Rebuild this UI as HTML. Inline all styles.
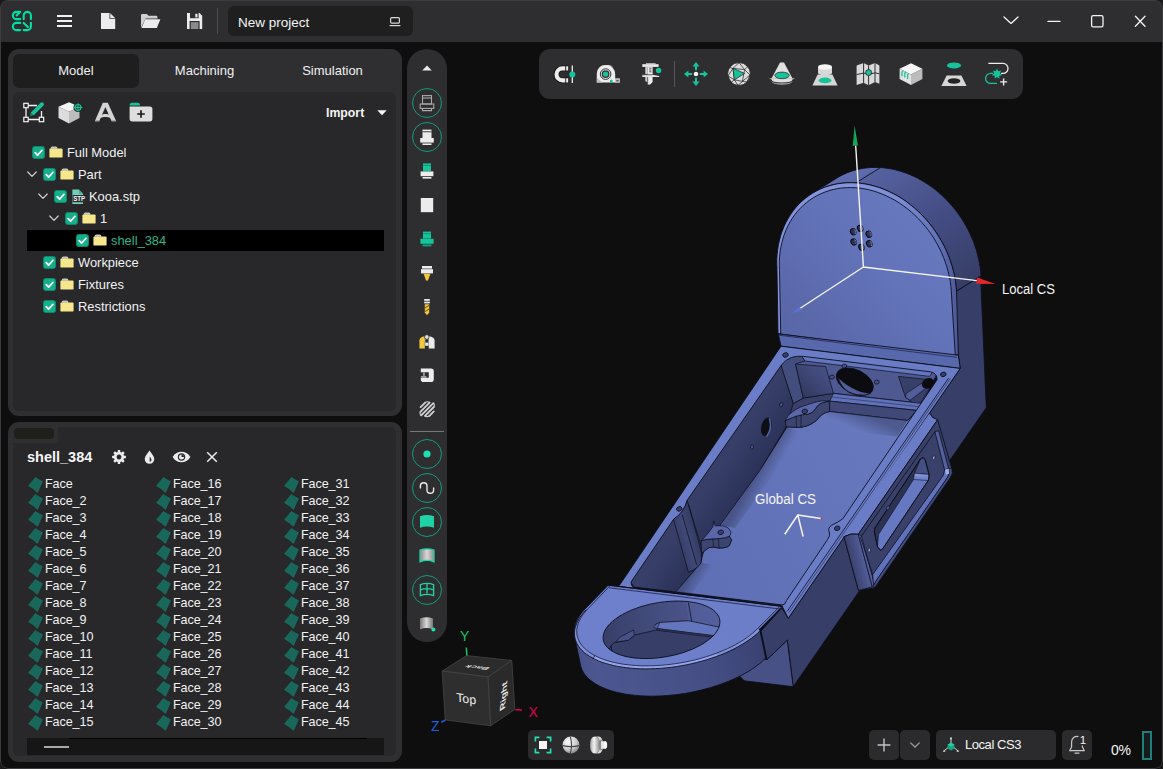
<!DOCTYPE html>
<html lang="en"><head><meta charset="utf-8"><title>New project</title>
<style>
*{box-sizing:border-box;margin:0;padding:0}
html,body{width:1163px;height:769px;overflow:hidden;background:#1a1a1a}
body{font-family:"Liberation Sans",sans-serif;color:#f2f2f2;position:relative}
#win{position:absolute;left:0;top:0;width:1163px;height:769px;background:#0e0e0e;border-radius:8px;overflow:hidden}
#frame{position:absolute;left:0;top:0;width:1163px;height:769px;border-radius:8px;border:1px solid #3c3c3e;pointer-events:none}
.abs{position:absolute}
#title{position:absolute;left:0;top:0;width:1163px;height:42px;background:#2e2e31}
#proj{position:absolute;left:228px;top:6px;width:185px;height:30px;background:#1f1f20;border-radius:6px;font-size:13.5px;line-height:33px;padding-left:10px;color:#f4f4f4}
.panel{position:absolute;background:#2f2f32;border-radius:11px}
.inner{position:absolute;background:#28282a;border-radius:6px}
.tab{position:absolute;top:54px;height:34px;line-height:34px;text-align:center;font-size:13px;color:#f0f0f0}
.tab.on{background:#1e1e1f;border-radius:6px}
.row{position:absolute;left:0;height:22px;line-height:23.6px;font-size:12.9px;color:#f2f2f2;white-space:nowrap}
.cb{position:absolute;width:13px;height:13px;border-radius:2.5px;background:#17b28c;border:1px solid #0f8f70}
.face{position:absolute;font-size:12.6px;line-height:17px;color:#f2f2f2;white-space:nowrap;letter-spacing:-0.1px}
.pill{position:absolute;left:407px;top:49px;width:40px;height:593px;border-radius:20px;background:#2e2e31}
.circ{position:absolute;left:412px;width:30px;height:30px;border-radius:15px;border:1.3px solid #129c7c}
#topbar{position:absolute;left:539px;top:49px;width:484px;height:50px;border-radius:11px;background:#2e2e31}
.bbtn{position:absolute;top:730px;height:30px;background:#2b2b2d;border-radius:5px}
svg{position:absolute;overflow:visible}
</style></head>
<body><div id="win">
<svg style="left:0;top:0" width="1163" height="769" viewBox="0 0 1163 769">
<polygon points="954.6,292.2 980.6,276.2 986.3,407.7 793.2,686.7 787.3,640.2 767.0,659.7 761.0,631.0 781.8,608.0 788.3,618.2 960.2,368.4 958.4,355.2" fill="#373e67" stroke="#0c0f1c" stroke-width="0.9" stroke-linejoin="round" />
<polygon points="787.3,640.2 793.2,686.7 744.1,680.8 715.0,650.0 767.0,659.7" fill="#475186" stroke="#0c0f1c" stroke-width="0.9" stroke-linejoin="round" />
<defs><linearGradient id="gBand" gradientUnits="userSpaceOnUse" x1="896.8" y1="328.4" x2="812.4" y2="193.3"><stop offset="-0.000" stop-color="#363d66"/><stop offset="0.038" stop-color="#373f69"/><stop offset="0.078" stop-color="#39406c"/><stop offset="0.119" stop-color="#3a426e"/><stop offset="0.162" stop-color="#3b4371"/><stop offset="0.205" stop-color="#3d4574"/><stop offset="0.249" stop-color="#3e4677"/><stop offset="0.294" stop-color="#3f4879"/><stop offset="0.339" stop-color="#41497c"/><stop offset="0.384" stop-color="#424b7f"/><stop offset="0.428" stop-color="#434c82"/><stop offset="0.473" stop-color="#454e84"/><stop offset="0.517" stop-color="#464f87"/><stop offset="0.560" stop-color="#485189"/><stop offset="0.602" stop-color="#49538c"/><stop offset="0.643" stop-color="#4b558e"/><stop offset="0.683" stop-color="#4c5791"/><stop offset="0.720" stop-color="#4e5993"/><stop offset="0.757" stop-color="#4f5a96"/><stop offset="0.791" stop-color="#515c98"/><stop offset="0.823" stop-color="#525e9b"/><stop offset="0.853" stop-color="#535f9c"/><stop offset="0.880" stop-color="#54609d"/><stop offset="0.905" stop-color="#56629f"/><stop offset="0.927" stop-color="#5d6bad"/><stop offset="0.946" stop-color="#5e6cae"/><stop offset="0.963" stop-color="#5e6caf"/><stop offset="0.977" stop-color="#5f6db0"/><stop offset="0.987" stop-color="#606eb0"/><stop offset="0.994" stop-color="#606eb1"/><stop offset="0.999" stop-color="#616fb2"/></linearGradient></defs>
<polygon points="956.5,291.0 956.2,286.8 955.7,282.6 955.0,278.4 954.1,274.2 953.1,270.0 952.0,265.8 950.6,261.7 949.2,257.6 947.5,253.5 945.7,249.5 943.8,245.5 941.7,241.6 939.5,237.8 937.2,234.0 934.7,230.4 932.1,226.8 929.3,223.3 926.5,220.0 923.5,216.7 920.5,213.6 917.3,210.6 914.1,207.7 910.7,204.9 907.3,202.3 903.8,199.9 900.2,197.6 896.6,195.4 892.9,193.4 889.1,191.6 885.4,189.9 881.6,188.4 877.7,187.1 873.8,185.9 870.0,184.9 866.1,184.1 862.2,183.5 858.3,183.0 854.5,182.8 850.6,182.7 846.8,182.8 843.1,183.1 839.4,183.5 835.7,184.2 832.1,185.0 828.5,186.0 825.0,187.2 821.6,188.5 818.3,190.0 815.1,191.7 812.0,193.6 836.5,178.3 839.6,176.4 842.8,174.7 846.1,173.2 849.5,171.9 853.0,170.7 856.6,169.7 860.2,168.9 863.9,168.2 867.6,167.8 871.3,167.5 875.1,167.4 879.0,167.5 882.8,167.7 886.7,168.2 890.6,168.8 894.5,169.6 898.3,170.6 902.2,171.8 906.1,173.1 909.9,174.6 913.6,176.3 917.4,178.1 921.1,180.1 924.7,182.3 928.3,184.6 931.8,187.0 935.2,189.6 938.6,192.4 941.8,195.3 945.0,198.3 948.0,201.4 951.0,204.7 953.8,208.0 956.6,211.5 959.2,215.1 961.7,218.7 964.0,222.5 966.2,226.3 968.3,230.2 970.2,234.2 972.0,238.2 973.7,242.3 975.1,246.4 976.5,250.5 977.6,254.7 978.6,258.9 979.5,263.1 980.2,267.3 980.7,271.5 981.0,275.7" fill="url(#gBand)" stroke="#0c0f1c" stroke-width="0.9" stroke-linejoin="round" />
<polyline points="855.9,182.9 880.4,167.6" fill="none" stroke="#0c0f1c" stroke-width="0.9" stroke-linejoin="round" stroke-linecap="round" />
<defs><linearGradient id="gCh" gradientUnits="userSpaceOnUse" x1="850" y1="0" x2="960" y2="0"><stop offset="0" stop-color="#8393dc"/><stop offset="0.450" stop-color="#7c8dd5"/><stop offset="0.800" stop-color="#6272b8"/><stop offset="1" stop-color="#4b5694"/></linearGradient></defs>
<polygon points="958.4,355.2 956.5,291.0 956.1,285.9 955.4,280.8 954.5,275.7 953.3,270.6 951.9,265.6 950.2,260.5 948.4,255.6 946.3,250.6 944.0,245.8 941.4,241.1 938.7,236.5 935.8,232.0 932.7,227.6 929.4,223.4 925.9,219.3 922.3,215.4 918.5,211.7 914.6,208.1 910.5,204.8 906.3,201.6 902.1,198.7 897.7,196.0 893.2,193.6 888.7,191.4 884.1,189.4 879.4,187.6 874.7,186.2 870.0,184.9 865.3,184.0 860.6,183.3 855.9,182.9 851.3,182.7 846.7,182.8 842.1,183.2 837.6,183.8 833.2,184.7 828.9,185.9 824.6,187.3 820.5,189.0 816.6,190.9 812.7,193.1 809.0,195.5 805.5,198.2 802.1,201.0 798.9,204.1 795.9,207.4 793.1,210.9 790.5,214.6 788.1,218.5 785.9,222.5 784.0,226.7 782.2,231.0 780.7,235.5 779.5,240.1 778.4,244.8 777.7,249.6 777.1,254.5 776.8,259.5 776.8,264.5 777.0,269.6 778.0,333.6" fill="url(#gCh)" stroke="#0c0f1c" stroke-width="0.9" stroke-linejoin="round" />
<defs><linearGradient id="gF" gradientUnits="userSpaceOnUse" x1="790" y1="340" x2="940" y2="200"><stop offset="0" stop-color="#5865a6"/><stop offset="0.550" stop-color="#6373b9"/><stop offset="1" stop-color="#697ac1"/></linearGradient></defs>
<polygon points="955.4,356.9 951.3,291.3 950.9,286.4 950.3,281.5 949.4,276.6 948.2,271.7 946.9,266.9 945.3,262.1 943.5,257.3 941.5,252.6 939.3,248.0 936.9,243.5 934.3,239.0 931.5,234.7 928.5,230.5 925.3,226.5 922.0,222.6 918.6,218.9 914.9,215.3 911.2,211.9 907.3,208.7 903.3,205.7 899.2,202.9 895.0,200.3 890.7,198.0 886.4,195.9 882.0,194.0 877.5,192.3 873.1,190.9 868.6,189.7 864.0,188.8 859.5,188.1 855.0,187.7 850.6,187.6 846.2,187.7 841.8,188.0 837.5,188.6 833.3,189.5 829.1,190.6 825.1,192.0 821.2,193.6 817.4,195.4 813.7,197.5 810.1,199.8 806.8,202.4 803.5,205.1 800.5,208.1 797.6,211.2 794.9,214.6 792.4,218.1 790.1,221.8 788.0,225.7 786.2,229.7 784.5,233.8 783.1,238.1 781.9,242.5 780.9,247.0 780.1,251.6 779.6,256.3 779.3,261.1 779.3,265.9 779.5,270.7 780.7,334.0" fill="url(#gF)" stroke="#0c0f1c" stroke-width="0.9" stroke-linejoin="round" />
<ellipse cx="860.2" cy="228.4" rx="2.600" ry="3.200" fill="#2e3557" stroke="#07080e" stroke-width="1.100" transform="rotate(-28 860.2 228.4)"/>
<path d="M860.6 226.0 a2.400 2.900 0 0 1 1.600 4.600" stroke="#8f9bd0" stroke-width="0.800" fill="none"/>
<ellipse cx="853.2" cy="231.8" rx="2.600" ry="3.200" fill="#2e3557" stroke="#07080e" stroke-width="1.100" transform="rotate(-28 853.2 231.8)"/>
<path d="M853.6 229.4 a2.400 2.900 0 0 1 1.600 4.600" stroke="#8f9bd0" stroke-width="0.800" fill="none"/>
<ellipse cx="868.8" cy="234.2" rx="2.600" ry="3.200" fill="#2e3557" stroke="#07080e" stroke-width="1.100" transform="rotate(-28 868.8 234.2)"/>
<path d="M869.2 231.8 a2.400 2.900 0 0 1 1.600 4.600" stroke="#8f9bd0" stroke-width="0.800" fill="none"/>
<ellipse cx="853.7" cy="242.0" rx="2.600" ry="3.200" fill="#2e3557" stroke="#07080e" stroke-width="1.100" transform="rotate(-28 853.7 242.0)"/>
<path d="M854.1 239.6 a2.400 2.900 0 0 1 1.600 4.600" stroke="#8f9bd0" stroke-width="0.800" fill="none"/>
<ellipse cx="869.3" cy="243.8" rx="2.600" ry="3.200" fill="#2e3557" stroke="#07080e" stroke-width="1.100" transform="rotate(-28 869.3 243.8)"/>
<path d="M869.7 241.4 a2.400 2.900 0 0 1 1.600 4.600" stroke="#8f9bd0" stroke-width="0.800" fill="none"/>
<ellipse cx="861.5" cy="247.2" rx="2.600" ry="3.200" fill="#2e3557" stroke="#07080e" stroke-width="1.100" transform="rotate(-28 861.5 247.2)"/>
<path d="M861.9 244.8 a2.400 2.900 0 0 1 1.600 4.600" stroke="#8f9bd0" stroke-width="0.800" fill="none"/>
<defs><linearGradient id="gLed" gradientUnits="userSpaceOnUse" x1="0" y1="340" x2="0" y2="366"><stop offset="0" stop-color="#525d99"/><stop offset="1" stop-color="#5865a6"/></linearGradient></defs>
<polygon points="778.3,334.0 958.4,355.2 960.2,368.4 781.0,346.2" fill="#5868ad" stroke="#0c0f1c" stroke-width="0.9" stroke-linejoin="round" />
<polyline points="779.5,335.3 956.5,357.3" fill="none" stroke="#1a2044" stroke-width="0.7" stroke-linejoin="round" stroke-linecap="round" />
<polygon points="783.0,356.0 938.2,372.5 781.5,604.9 631.0,587.0" fill="#39416a" stroke="#0c0f1c" stroke-width="0.8" stroke-linejoin="round" />
<polygon points="790.0,354.5 938.0,372.0 922.5,403.5 833.5,393.4 803.3,398.0 793.2,403.5 781.6,367.1" fill="#4e5992" stroke="#0c0f1c" stroke-width="0.8" stroke-linejoin="round" />
<polygon points="801.0,355.5 933.0,371.5 929.5,376.4 804.8,361.0" fill="#6476bf" stroke="#0c0f1c" stroke-width="0.7" stroke-linejoin="round" />
<polygon points="780.0,364.0 793.2,403.5 803.3,398.0 795.5,364.0 804.8,361.0 801.0,355.0 788.0,355.0" fill="#434d7e" stroke="#0c0f1c" stroke-width="0.7" stroke-linejoin="round" />
<defs><linearGradient id="gRec" gradientUnits="userSpaceOnUse" x1="800" y1="395" x2="826" y2="368"><stop offset="0" stop-color="#32395e"/><stop offset="1" stop-color="#475186"/></linearGradient></defs>
<polygon points="795.5,364.0 825.7,366.6 833.5,393.4 803.3,398.0" fill="url(#gRec)" stroke="#0c0f1c" stroke-width="0.7" stroke-linejoin="round" />
<polygon points="898.5,376.4 934.0,380.2 931.0,386.0 917.0,409.0 910.0,400.3 905.4,397.3" fill="#383f69" stroke="#0c0f1c" stroke-width="0.7" stroke-linejoin="round" />
<polygon points="906.2,393.4 921.7,383.3 926.3,388.0 910.0,400.3 905.4,397.3" fill="#525d99" stroke="#0c0f1c" stroke-width="0.6" stroke-linejoin="round" />
<ellipse cx="927.900" cy="383.300" rx="6.300" ry="5" fill="#0c0c10" transform="rotate(-30 927.900 383.300)"/>
<ellipse cx="854.800" cy="381.600" rx="19.800" ry="11.800" fill="#0c0c10" stroke="#0a0c18" stroke-width="0.800" transform="rotate(26 854.800 381.600)"/>
<path d="M838.200 377.500 Q842 392 856 394.500 Q864 396 870.500 393.500 Q860 392.500 852.500 388 Q843 383 838.200 377.500Z" fill="#525d99" stroke="#0c0f1c" stroke-width="0.6" stroke-linejoin="round" stroke-linecap="round" />
<path d="M839.500 382.500 Q845 394.500 862 396.200" fill="none" stroke="#0a0c18" stroke-width="0.6" stroke-linejoin="round" stroke-linecap="round" />
<ellipse cx="844.3" cy="366.0" rx="2.400" ry="2" fill="#475186" stroke="#0a0c18" stroke-width="0.700" transform="rotate(-15 844.3 366.0)"/>
<ellipse cx="831.9" cy="377.1" rx="2.400" ry="2" fill="#475186" stroke="#0a0c18" stroke-width="0.700" transform="rotate(-15 831.9 377.1)"/>
<ellipse cx="876.8" cy="382.1" rx="2.400" ry="2" fill="#475186" stroke="#0a0c18" stroke-width="0.700" transform="rotate(-15 876.8 382.1)"/>
<ellipse cx="855.9" cy="406.2" rx="2.400" ry="2" fill="#475186" stroke="#0a0c18" stroke-width="0.700" transform="rotate(-15 855.9 406.2)"/>
<polyline points="860.5,394.5 856.5,404.5" fill="none" stroke="#0c0f1c" stroke-width="0.6" stroke-linejoin="round" stroke-linecap="round" />
<polygon points="833.5,393.4 922.5,403.5 917.0,410.4 829.6,401.1" fill="#6071b9" stroke="#0c0f1c" stroke-width="0.7" stroke-linejoin="round" />
<polyline points="831.5,397.0 920.0,406.8" fill="none" stroke="#282e4c" stroke-width="0.6" stroke-linejoin="round" stroke-linecap="round" />
<polygon points="829.6,401.1 917.0,410.4 907.8,420.5 829.6,411.5" fill="#3f4877" stroke="#0c0f1c" stroke-width="0.7" stroke-linejoin="round" />
<defs><linearGradient id="gLW" gradientUnits="userSpaceOnUse" x1="738" y1="440" x2="768" y2="460"><stop offset="0" stop-color="#373f69"/><stop offset="1" stop-color="#2b3157"/></linearGradient></defs>
<polygon points="781.0,360.0 781.6,367.1 793.2,403.5 786.3,426.7 760.2,470.0 720.0,526.0 702.7,548.7 701.2,562.7 676.0,591.8 634.3,587.1 631.2,583.0 631.3,580.5" fill="url(#gLW)" stroke="#0c0f1c" stroke-width="0.8" stroke-linejoin="round" />
<defs><linearGradient id="gPil" gradientUnits="userSpaceOnUse" x1="676" y1="545" x2="700" y2="538"><stop offset="0" stop-color="#333a60"/><stop offset="0.500" stop-color="#3f4877"/><stop offset="1" stop-color="#32395e"/></linearGradient></defs>
<path d="M673.800 519 Q684 512 687.100 500.300 L701.900 548.700 L701.200 562.700 Q699 568 688.700 572.100 Z" fill="url(#gPil)" stroke="#0c0f1c" stroke-width="0.7" stroke-linejoin="round" stroke-linecap="round" />
<polyline points="682.4,515.1 696.5,564.3" fill="none" stroke="#0c0f1c" stroke-width="0.7" stroke-linejoin="round" stroke-linecap="round" />
<polyline points="688.7,505.0 701.2,552.0" fill="none" stroke="#0c0f1c" stroke-width="0.7" stroke-linejoin="round" stroke-linecap="round" stroke-dasharray="2.200 1.100"/>
<defs><linearGradient id="gFl" gradientUnits="userSpaceOnUse" x1="700" y1="540" x2="890" y2="440"><stop offset="0" stop-color="#6070b6"/><stop offset="0.500" stop-color="#6474ba"/><stop offset="1" stop-color="#6778be"/></linearGradient></defs>
<path d="M787.500 426.900 L796.300 427.400 Q807 428 816.400 420.500 Q822 412.500 829.600 411.500 L907.800 420.500 L917 410.400 L922.500 403.500 L945 381 L790 606 L676 591.800 L701.200 562.700 Q702.500 552 705.100 550.200 Q709 546.500 713.600 547.100 Q719 548.500 723 547.900 Q728.500 547 729.300 545.600 L731.600 540.100 L729.300 536.200 L725 527 L719.500 526 L760.200 470 Z" fill="url(#gFl)" stroke="#0c0f1c" stroke-width="0.8" stroke-linejoin="round" stroke-linecap="round" />
<defs><linearGradient id="gAO1" gradientUnits="userSpaceOnUse" x1="868" y1="416" x2="861" y2="432"><stop offset="0" stop-color="#2a304f" stop-opacity="0.420"/><stop offset="1" stop-color="#2a304f" stop-opacity="0"/></linearGradient><linearGradient id="gAO2" gradientUnits="userSpaceOnUse" x1="754" y1="478" x2="768" y2="486"><stop offset="0" stop-color="#2a304f" stop-opacity="0.450"/><stop offset="1" stop-color="#2a304f" stop-opacity="0"/></linearGradient><linearGradient id="gAO3" gradientUnits="userSpaceOnUse" x1="690" y1="577" x2="702" y2="584"><stop offset="0" stop-color="#2a304f" stop-opacity="0.450"/><stop offset="1" stop-color="#2a304f" stop-opacity="0"/></linearGradient></defs>
<polygon points="816.4,420.5 829.6,411.5 907.8,420.5 897.0,436.5 822.0,428.0 808.0,436.0" fill="url(#gAO1)" stroke="none" stroke-width="0" stroke-linejoin="round" />
<polygon points="787.5,426.9 760.2,470.0 721.0,525.0 735.0,528.0 774.0,474.0 801.0,433.0" fill="url(#gAO2)" stroke="none" stroke-width="0" stroke-linejoin="round" />
<polygon points="701.2,562.7 676.0,591.8 691.0,593.5 715.0,565.0" fill="url(#gAO3)" stroke="none" stroke-width="0" stroke-linejoin="round" />
<path d="M785.500 420.500 Q791 418 796.300 416.200 Q803 414 807.900 414.300 Q812.500 413 814.900 409.600 Q817 405.500 819.500 404.200 Q822 402 829.600 401.100 L829.600 411.500 Q822 412.500 816.400 420.500 Q807 428 796.300 427.400 L786.300 426.700 Z" fill="#3c4470" stroke="#0c0f1c" stroke-width="0.7" stroke-linejoin="round" stroke-linecap="round" />
<path d="M785.500 420.500 Q787.500 414.500 793.200 411.200 Q797 408.500 801 406.900 L810.200 403.800 Q816 401.500 822.600 400.700 L829.600 401.100 Q822 402 819.500 404.200 Q817 405.500 814.900 409.600 Q812.500 413 807.900 414.300 Q803 414 796.300 416.200 Q791 418 785.500 420.500 Z" fill="#5a67aa" stroke="#0c0f1c" stroke-width="0.7" stroke-linejoin="round" stroke-linecap="round" />
<ellipse cx="804.800" cy="411.300" rx="2.900" ry="2.300" fill="#383f69" stroke="#0a0c18" stroke-width="0.700" transform="rotate(-15 804.800 411.300)"/>
<polyline points="796.3,416.2 796.3,427.4" fill="none" stroke="#0c0f1c" stroke-width="0.6" stroke-linejoin="round" stroke-linecap="round" />
<polyline points="801.0,415.0 801.0,427.6" fill="none" stroke="#0c0f1c" stroke-width="0.6" stroke-linejoin="round" stroke-linecap="round" />
<ellipse cx="766.300" cy="426.800" rx="4.600" ry="9" fill="#0e0f16" stroke="#0a0c18" stroke-width="0.700" transform="rotate(14 766.300 426.800)"/>
<path d="M769.500 419 Q772.500 428 767 436" fill="none" stroke="#5764a4" stroke-width="1.5" stroke-linejoin="round" stroke-linecap="round" />
<ellipse cx="781.200" cy="404.800" rx="1.600" ry="2.300" fill="#485287" stroke="#0a0c18" stroke-width="0.700" transform="rotate(14 781.200 404.800)"/>
<ellipse cx="752" cy="447" rx="1.600" ry="2.300" fill="#485287" stroke="#0a0c18" stroke-width="0.700" transform="rotate(14 752 447)"/>
<path d="M701.200 540.900 Q704 539.500 707.400 539.300 L719.900 538.500 Q726 538 729.300 536.200 L731.600 540.100 L729.300 545.600 Q728.500 547 723 547.900 Q719 548.500 713.600 547.100 Q709 546.500 705.100 550.200 L701.900 553.400 Z" fill="#3c4470" stroke="#0c0f1c" stroke-width="0.7" stroke-linejoin="round" stroke-linecap="round" />
<path d="M713.600 521.400 L713 526.500 Q708 534 701.200 540.900 Q704 539.500 707.400 539.300 L719.900 538.500 Q726 538 729.300 536.200 Q731.500 534 730.800 531.500 Q729 527 724 526 Q719 525.500 715.500 525.800 Z" fill="#5966a8" stroke="#0c0f1c" stroke-width="0.7" stroke-linejoin="round" stroke-linecap="round" />
<ellipse cx="720.700" cy="532.300" rx="2.900" ry="2.300" fill="#383f69" stroke="#0a0c18" stroke-width="0.700" transform="rotate(-15 720.700 532.300)"/>
<polyline points="713.0,539.0 713.6,547.1" fill="none" stroke="#0c0f1c" stroke-width="0.6" stroke-linejoin="round" stroke-linecap="round" />
<polyline points="718.5,538.6 719.0,548.2" fill="none" stroke="#0c0f1c" stroke-width="0.6" stroke-linejoin="round" stroke-linecap="round" />
<defs><linearGradient id="gRim" gradientUnits="userSpaceOnUse" x1="640" y1="560" x2="950" y2="380"><stop offset="0" stop-color="#6b7dc7"/><stop offset="1" stop-color="#6a7cc6"/></linearGradient></defs>
<path fill-rule="evenodd" d="M781 346.200 L960.200 368.400 L788.300 618.200 L782.200 606.400 L608.200 585.200 L619.250 585.600 Z M781.800 364.500 Q785.500 359.800 791.500 357.400 Q797 355.600 803.700 356.400 L931 371.900 Q937.800 373.600 936.900 380 L842.800 518.800 Q837.500 522.600 831.700 525.200 Q827.300 528 829.300 532 Q830.500 536 827.600 539.500 L786.500 600.500 Q785 605.600 781.500 605.200 L635.500 588 Q630.500 587 631.300 581.500 L673.800 519 Q684 512.500 687.100 500.300 Z" fill="url(#gRim)" stroke="#0c0f1c" stroke-width="0.900" stroke-linejoin="round"/>
<polyline points="948.3,378.5 787.3,611.2" fill="none" stroke="#141a38" stroke-width="0.9" stroke-linejoin="round" stroke-linecap="round" />
<polyline points="950.3,378.7 789.0,612.5" fill="none" stroke="#2b3151" stroke-width="0.7" stroke-linejoin="round" stroke-linecap="round" />
<ellipse cx="785.5" cy="355.0" rx="2.800" ry="2.200" fill="#383f69" stroke="#0a0c18" stroke-width="0.800" transform="rotate(-20 785.5 355.0)"/>
<ellipse cx="943.3" cy="374.4" rx="2.800" ry="2.200" fill="#383f69" stroke="#0a0c18" stroke-width="0.800" transform="rotate(-20 943.3 374.4)"/>
<ellipse cx="679.3" cy="508.9" rx="2.800" ry="2.200" fill="#383f69" stroke="#0a0c18" stroke-width="0.800" transform="rotate(-20 679.3 508.9)"/>
<ellipse cx="837.2" cy="528.3" rx="2.800" ry="2.200" fill="#383f69" stroke="#0a0c18" stroke-width="0.800" transform="rotate(-20 837.2 528.3)"/>
<polygon points="929.2,413.7 932.5,417.4 937.6,419.8 858.3,534.3 851.0,534.2 842.6,536.9" fill="#6a7cc6" stroke="none" stroke-width="0" stroke-linejoin="round" />
<polyline points="930.6,413.9 932.5,417.4 937.6,419.8 858.3,534.3 851.0,534.2 844.0,536.8" fill="none" stroke="#0c0f1c" stroke-width="0.9" stroke-linejoin="round" stroke-linecap="round" />
<polygon points="937.6,419.8 951.8,468.5 952.3,473.0 950.3,477.5 874.5,588.0 858.5,590.5 844.0,536.8 851.0,534.2 858.3,534.3" fill="#39416a" stroke="#0c0f1c" stroke-width="0.9" stroke-linejoin="round" />
<defs><linearGradient id="gFil" gradientUnits="userSpaceOnUse" x1="848" y1="560" x2="864" y2="556"><stop offset="0" stop-color="#373e67"/><stop offset="0.700" stop-color="#495389"/><stop offset="1" stop-color="#535e9b"/></linearGradient></defs>
<polygon points="844.0,536.8 851.0,534.2 858.3,534.3 872.3,586.8 858.5,590.5" fill="url(#gFil)" stroke="#0c0f1c" stroke-width="0.8" stroke-linejoin="round" />
<polygon points="858.3,534.3 861.3,535.6 874.6,585.0 872.3,586.8" fill="#5662a2" stroke="#0c0f1c" stroke-width="0.7" stroke-linejoin="round" />
<polygon points="944.6,470.0 948.6,468.3 949.3,473.5 947.3,477.8 876.8,579.8 873.6,585.4 872.6,574.6 943.4,475.2" fill="#6072bb" stroke="#0c0f1c" stroke-width="0.8" stroke-linejoin="round" />
<polygon points="948.6,468.3 951.8,468.5 952.3,473.0 950.3,477.5 874.5,588.0 873.6,585.4 876.8,579.8 947.3,477.8 949.3,473.5" fill="#444e80" stroke="#0c0f1c" stroke-width="0.7" stroke-linejoin="round" />
<polygon points="934.9,431.8 938.6,430.6 948.6,468.3 944.6,470.0" fill="#54609f" stroke="#0c0f1c" stroke-width="0.8" stroke-linejoin="round" />
<polygon points="944.8,469.8 948.6,468.4 949.2,473.4 946.0,474.8" fill="#a2b0ea" stroke="none" stroke-width="0" stroke-linejoin="round" />
<polyline points="934.9,431.8 933.7,433.4 860.5,537.5 872.6,574.6" fill="none" stroke="#0c0f1c" stroke-width="0.8" stroke-linejoin="round" stroke-linecap="round" />
<polygon points="923.2,457.5 925.2,460.0 929.0,474.5 928.5,480.0 882.5,549.0 880.3,550.3 877.5,546.5 874.3,531.5 875.0,528.0 920.5,459.0" fill="#6678c2" stroke="#0c0f1c" stroke-width="0.8" stroke-linejoin="round" />
<polygon points="920.5,459.0 914.5,473.0 913.5,479.5 878.5,534.5 877.5,546.5 874.3,531.5 875.0,528.0" fill="#2c3253" stroke="#0c0f1c" stroke-width="0.6" stroke-linejoin="round" />
<polygon points="923.2,457.5 925.2,460.0 929.0,474.5 914.5,473.2 920.5,459.0" fill="#454f82" stroke="#0c0f1c" stroke-width="0.6" stroke-linejoin="round" />
<defs><linearGradient id="gCyl" x1="0" y1="0" x2="0" y2="1"><stop offset="0" stop-color="#8d9de2"/><stop offset="1" stop-color="#6173bb"/></linearGradient></defs>
<polygon points="914.5,473.2 929.0,474.5 928.4,480.6 913.5,479.5" fill="url(#gCyl)" stroke="#0c0f1c" stroke-width="0.5" stroke-linejoin="round" />
<polygon points="923.2,457.5 925.2,460.0 929.0,474.5 928.5,480.0 882.5,549.0 880.3,550.3 877.5,546.5 874.3,531.5 875.0,528.0 920.5,459.0" fill="none" stroke="#0c0f1c" stroke-width="0.800"/>
<ellipse cx="933.700" cy="457.800" rx="1.300" ry="2" fill="#97a5e4" stroke="#0a0c18" stroke-width="0.600" transform="rotate(15 933.700 457.800)"/>
<ellipse cx="869.300" cy="550.100" rx="1.300" ry="2" fill="#97a5e4" stroke="#0a0c18" stroke-width="0.600" transform="rotate(15 869.300 550.100)"/>
<ellipse cx="887.900" cy="507.900" rx="1.400" ry="2.200" fill="#525d99" stroke="#0a0c18" stroke-width="0.600" transform="rotate(30 887.900 507.900)"/>
<defs><linearGradient id="gRB" gradientUnits="userSpaceOnUse" x1="754.2" y1="601.8" x2="575.1" y2="638.8"><stop offset="-0.000" stop-color="#394170"/><stop offset="0.022" stop-color="#3a4272"/><stop offset="0.046" stop-color="#3b4374"/><stop offset="0.073" stop-color="#3c4576"/><stop offset="0.101" stop-color="#3d4677"/><stop offset="0.131" stop-color="#3e4779"/><stop offset="0.162" stop-color="#3f487b"/><stop offset="0.195" stop-color="#40497d"/><stop offset="0.229" stop-color="#414b7f"/><stop offset="0.264" stop-color="#424c81"/><stop offset="0.301" stop-color="#434d82"/><stop offset="0.337" stop-color="#444e84"/><stop offset="0.375" stop-color="#454f86"/><stop offset="0.413" stop-color="#465087"/><stop offset="0.451" stop-color="#475188"/><stop offset="0.489" stop-color="#475189"/><stop offset="0.527" stop-color="#475289"/><stop offset="0.564" stop-color="#48528a"/><stop offset="0.601" stop-color="#48528a"/><stop offset="0.638" stop-color="#48538b"/><stop offset="0.673" stop-color="#49538c"/><stop offset="0.707" stop-color="#49548c"/><stop offset="0.741" stop-color="#4a548d"/><stop offset="0.772" stop-color="#4a558d"/><stop offset="0.802" stop-color="#4a558e"/><stop offset="0.831" stop-color="#4b558f"/><stop offset="0.857" stop-color="#4b568f"/><stop offset="0.882" stop-color="#4b5690"/><stop offset="0.905" stop-color="#4c5791"/><stop offset="0.925" stop-color="#4c5791"/><stop offset="0.943" stop-color="#4b568f"/><stop offset="0.959" stop-color="#4a558e"/><stop offset="0.972" stop-color="#4a548d"/><stop offset="0.983" stop-color="#49538c"/><stop offset="0.991" stop-color="#48528a"/><stop offset="0.997" stop-color="#475289"/><stop offset="1.000" stop-color="#475188"/></linearGradient></defs>
<polygon points="759.8,629.0 757.7,631.0 755.5,633.0 753.1,635.0 750.6,636.9 748.0,638.8 745.2,640.6 742.3,642.5 739.2,644.2 736.0,646.0 732.8,647.7 729.4,649.3 725.9,650.9 722.3,652.4 718.6,653.8 714.8,655.2 711.0,656.5 707.1,657.8 703.1,659.0 699.1,660.1 695.0,661.1 690.9,662.1 686.8,663.0 682.6,663.8 678.4,664.5 674.2,665.1 670.0,665.7 665.8,666.1 661.6,666.5 657.4,666.8 653.3,667.0 649.2,667.1 645.2,667.2 641.1,667.1 637.2,666.9 633.3,666.7 629.5,666.4 625.8,666.0 622.1,665.5 618.5,664.9 615.1,664.2 611.7,663.5 608.5,662.7 605.4,661.8 602.3,660.8 599.5,659.7 596.7,658.6 594.1,657.4 591.7,656.1 589.3,654.7 587.2,653.3 585.2,651.8 583.3,650.3 581.6,648.7 580.1,647.1 578.7,645.4 577.5,643.6 576.5,641.8 575.7,640.0 575.0,638.1 574.5,636.2 580.5,665.2 581.0,667.1 581.7,669.0 582.5,670.8 583.5,672.6 584.7,674.4 586.1,676.1 587.6,677.7 589.3,679.3 591.2,680.8 593.2,682.3 595.3,683.7 597.7,685.1 600.1,686.4 602.7,687.6 605.5,688.7 608.3,689.8 611.4,690.8 614.5,691.7 617.7,692.5 621.1,693.2 624.5,693.9 628.1,694.5 631.8,695.0 635.5,695.4 639.3,695.7 643.2,695.9 647.1,696.1 651.2,696.2 655.2,696.1 659.3,696.0 663.4,695.8 667.6,695.5 671.8,695.1 676.0,694.7 680.2,694.1 684.4,693.5 688.6,692.8 692.8,692.0 696.9,691.1 701.0,690.1 705.1,689.1 709.1,688.0 713.1,686.8 717.0,685.5 720.8,684.2 724.6,682.8 728.3,681.4 731.9,679.9 735.4,678.3 738.8,676.7 742.0,675.0 745.2,673.2 748.3,671.5 751.2,669.6 754.0,667.8 756.6,665.9 759.1,664.0 761.5,662.0 763.7,660.0 765.8,658.0" fill="url(#gRB)" stroke="#0c0f1c" stroke-width="0.9" stroke-linejoin="round" />
<defs><linearGradient id="gRing" gradientUnits="userSpaceOnUse" x1="590" y1="640" x2="770" y2="600"><stop offset="0" stop-color="#6e80cb"/><stop offset="1" stop-color="#6c7ec8"/></linearGradient></defs>
<polygon points="782.2,606.4 759.8,629.0 757.2,631.5 754.4,633.9 751.4,636.3 748.2,638.6 744.8,640.9 741.1,643.1 737.3,645.3 733.3,647.4 729.1,649.4 724.8,651.3 720.4,653.2 715.8,654.9 711.1,656.5 706.3,658.1 701.3,659.5 696.4,660.8 691.3,662.0 686.2,663.1 681.1,664.0 675.9,664.9 670.8,665.6 665.6,666.2 660.5,666.6 655.3,666.9 650.3,667.1 645.3,667.2 640.4,667.1 635.5,666.9 630.8,666.5 626.2,666.0 621.7,665.4 617.3,664.7 613.1,663.8 609.1,662.8 605.3,661.7 601.6,660.5 598.1,659.2 594.8,657.7 591.8,656.1 588.9,654.5 586.3,652.7 584.0,650.9 581.8,648.9 579.9,646.9 578.3,644.8 577.0,642.6 575.9,640.4 575.0,638.1 574.5,635.7 574.2,633.3 574.1,630.9 574.4,628.4 574.9,625.9 575.7,623.4 576.7,620.8 578.0,618.3 579.6,615.7 581.4,613.2 583.5,610.7 585.8,608.2 608.2,585.2" fill="url(#gRing)" stroke="#0c0f1c" stroke-width="0.9" stroke-linejoin="round" />
<polygon points="760.1,630.7 757.6,633.2 754.8,635.6 751.8,638.0 748.5,640.3 745.1,642.6 741.5,644.8 737.7,647.0 733.7,649.1 729.5,651.1 725.2,653.0 720.7,654.9 716.1,656.6 711.4,658.2 706.6,659.8 701.7,661.2 696.7,662.5 691.7,663.7 686.6,664.8 681.4,665.7 676.3,666.6 671.1,667.3 665.9,667.9 660.8,668.3 655.7,668.6 650.6,668.8 645.6,668.9 640.7,668.8 635.9,668.6 631.1,668.2 626.5,667.7 622.0,667.1 617.7,666.4 613.5,665.5 609.5,664.5 605.6,663.4 601.9,662.2 598.5,660.9 595.2,659.4 592.1,657.8 589.3,656.2 586.7,654.4 584.3,652.6 582.2,650.6 580.3,648.6 578.7,646.5 577.3,644.3 576.2,642.1 575.4,639.8 574.8,637.4 574.5,635.0 574.5,632.6 574.7,630.1 575.2,627.6 576.0,625.1 577.1,622.5 578.4,620.0 579.9,617.4 581.8,614.9 583.8,612.4 586.2,609.9 588.2,608.5 585.9,610.9 583.9,613.4 582.1,615.8 580.6,618.3 579.3,620.8 578.3,623.2 577.5,625.7 577.0,628.1 576.8,630.5 576.8,632.9 577.1,635.2 577.7,637.5 578.5,639.8 579.6,642.0 580.9,644.1 582.5,646.1 584.3,648.1 586.4,650.0 588.7,651.8 591.2,653.5 594.0,655.1 596.9,656.6 600.1,658.1 603.5,659.4 607.1,660.6 610.8,661.6 614.8,662.6 618.8,663.4 623.1,664.2 627.4,664.7 631.9,665.2 636.5,665.5 641.2,665.8 646.0,665.8 650.9,665.8 655.8,665.6 660.8,665.3 665.8,664.9 670.8,664.3 675.8,663.6 680.9,662.8 685.9,661.9 690.8,660.8 695.7,659.7 700.6,658.4 705.3,657.0 710.0,655.5 714.6,653.9 719.1,652.2 723.4,650.4 727.6,648.6 731.7,646.6 735.6,644.6 739.3,642.5 742.8,640.3 746.2,638.1 749.3,635.8 752.2,633.5 754.9,631.1 757.4,628.7" fill="#8191da" stroke="none" stroke-width="0" stroke-linejoin="round" />
<polygon points="717.7,656.0 714.5,657.2 711.3,658.3 708.1,659.3 704.8,660.3 701.5,661.2 698.1,662.1 694.7,663.0 691.3,663.8 687.9,664.5 684.4,665.2 681.0,665.8 677.5,666.4 674.0,666.9 670.5,667.4 667.0,667.7 663.5,668.1 660.1,668.4 656.6,668.6 653.2,668.7 649.8,668.8 646.4,668.9 643.1,668.8 639.8,668.7 636.5,668.6 633.3,668.4 630.1,668.1 627.0,667.8 624.0,667.4 621.0,667.0 618.0,666.4 615.2,665.9 612.4,665.3 609.7,664.6 607.1,663.9 604.5,663.1 602.1,662.2 599.7,661.3 597.4,660.4 595.2,659.4 593.1,658.4 594.9,655.6 597.0,656.7 599.1,657.6 601.3,658.5 603.6,659.4 606.0,660.2 608.5,661.0 611.1,661.7 613.7,662.3 616.4,663.0 619.2,663.5 622.0,664.0 625.0,664.4 627.9,664.8 631.0,665.1 634.0,665.4 637.2,665.6 640.3,665.7 643.5,665.8 646.8,665.8 650.1,665.8 653.4,665.7 656.7,665.6 660.1,665.4 663.4,665.1 666.8,664.8 670.2,664.4 673.6,663.9 677.0,663.4 680.4,662.9 683.8,662.3 687.1,661.6 690.5,660.9 693.8,660.1 697.1,659.3 700.4,658.4 703.6,657.5 706.8,656.5 710.0,655.5 713.1,654.5 716.1,653.4" fill="#93a3ec" stroke="none" stroke-width="0" stroke-linejoin="round" />
<polyline points="780.1,606.1 757.4,628.7 754.9,631.1 752.2,633.5 749.3,635.8 746.2,638.1 742.8,640.3 739.3,642.5 735.6,644.6 731.7,646.6 727.6,648.6 723.4,650.4 719.1,652.2 714.6,653.9 710.0,655.5 705.3,657.0 700.6,658.4 695.7,659.7 690.8,660.8 685.9,661.9 680.9,662.8 675.8,663.6 670.8,664.3 665.8,664.9 660.8,665.3 655.8,665.6 650.9,665.8 646.0,665.8 641.2,665.8 636.5,665.5 631.9,665.2 627.4,664.7 623.1,664.2 618.8,663.4 614.8,662.6 610.8,661.6 607.1,660.6 603.5,659.4 600.1,658.1 596.9,656.6 594.0,655.1 591.2,653.5 588.7,651.8 586.4,650.0 584.3,648.1 582.5,646.1 580.9,644.1 579.6,642.0 578.5,639.8 577.7,637.5 577.1,635.2 576.8,632.9 576.8,630.5 577.0,628.1 577.5,625.7 578.3,623.2 579.3,620.8 580.6,618.3 582.1,615.8 583.9,613.4 585.9,610.9 588.2,608.5 610.3,585.5" fill="none" stroke="#161b3a" stroke-width="0.8" stroke-linejoin="round" stroke-linecap="round" />
<polyline points="760.1,630.7 757.6,633.2 754.8,635.6 751.8,638.0 748.5,640.3 745.1,642.6 741.5,644.8 737.7,647.0 733.7,649.1 729.5,651.1 725.2,653.0 720.7,654.9 716.1,656.6 711.4,658.2 706.6,659.8 701.7,661.2 696.7,662.5 691.7,663.7 686.6,664.8 681.4,665.7 676.3,666.6 671.1,667.3 665.9,667.9 660.8,668.3 655.7,668.6 650.6,668.8 645.6,668.9 640.7,668.8 635.9,668.6 631.1,668.2 626.5,667.7 622.0,667.1 617.7,666.4 613.5,665.5 609.5,664.5 605.6,663.4 601.9,662.2 598.5,660.9 595.2,659.4 592.1,657.8 589.3,656.2 586.7,654.4 584.3,652.6 582.2,650.6 580.3,648.6 578.7,646.5 577.3,644.3 576.2,642.1 575.4,639.8 574.8,637.4 574.5,635.0 574.5,632.6 574.7,630.1 575.2,627.6 576.0,625.1 577.1,622.5 578.4,620.0 579.9,617.4 581.8,614.9 583.8,612.4 586.2,609.9" fill="none" stroke="#0c0f1c" stroke-width="0.9" stroke-linejoin="round" stroke-linecap="round" />
<polyline points="593.1,658.4 594.9,655.6" fill="none" stroke="#0c0f1c" stroke-width="0.7" stroke-linejoin="round" stroke-linecap="round" />
<polyline points="759.8,629.0 765.8,658.0" fill="none" stroke="#0c0f1c" stroke-width="0.8" stroke-linejoin="round" stroke-linecap="round" />
<polyline points="608.2,585.2 782.2,606.4" fill="none" stroke="#0c0f1c" stroke-width="0.9" stroke-linejoin="round" stroke-linecap="round" />
<polyline points="609.5,587.8 781.4,609.2" fill="none" stroke="#1a2044" stroke-width="0.8" stroke-linejoin="round" stroke-linecap="round" />
<clipPath id="cpH"><polygon points="713.0,636.0 710.4,638.4 707.4,640.7 704.1,643.0 700.4,645.2 696.5,647.2 692.3,649.2 687.8,650.9 683.2,652.6 678.4,654.0 673.5,655.3 668.4,656.3 663.3,657.2 658.3,657.8 653.2,658.3 648.2,658.5 643.3,658.5 638.5,658.3 633.9,657.9 629.5,657.2 625.4,656.4 621.5,655.3 618.0,654.1 614.7,652.6 611.9,651.0 609.4,649.3 607.3,647.3 605.6,645.3 604.3,643.1 603.5,640.9 603.1,638.5 603.2,636.1 603.7,633.6 604.6,631.1 606.0,628.6 607.8,626.1 610.0,623.6 612.6,621.2 615.6,618.9 618.9,616.6 622.6,614.4 626.5,612.4 630.7,610.4 635.2,608.7 639.8,607.0 644.6,605.6 649.5,604.3 654.6,603.3 659.7,602.4 664.7,601.8 669.8,601.3 674.8,601.1 679.7,601.1 684.5,601.3 689.1,601.7 693.5,602.4 697.6,603.2 701.5,604.3 705.0,605.5 708.3,607.0 711.1,608.6 713.6,610.3 715.7,612.3 717.4,614.3 718.7,616.5 719.5,618.7 719.9,621.1 719.8,623.5 719.3,626.0 718.4,628.5 717.0,631.0 715.2,633.5 713.0,636.0"/></clipPath>
<g clip-path="url(#cpH)">
<polygon points="713.0,636.0 710.4,638.4 707.4,640.7 704.1,643.0 700.4,645.2 696.5,647.2 692.3,649.2 687.8,650.9 683.2,652.6 678.4,654.0 673.5,655.3 668.4,656.3 663.3,657.2 658.3,657.8 653.2,658.3 648.2,658.5 643.3,658.5 638.5,658.3 633.9,657.9 629.5,657.2 625.4,656.4 621.5,655.3 618.0,654.1 614.7,652.6 611.9,651.0 609.4,649.3 607.3,647.3 605.6,645.3 604.3,643.1 603.5,640.9 603.1,638.5 603.2,636.1 603.7,633.6 604.6,631.1 606.0,628.6 607.8,626.1 610.0,623.6 612.6,621.2 615.6,618.9 618.9,616.6 622.6,614.4 626.5,612.4 630.7,610.4 635.2,608.7 639.8,607.0 644.6,605.6 649.5,604.3 654.6,603.3 659.7,602.4 664.7,601.8 669.8,601.3 674.8,601.1 679.7,601.1 684.5,601.3 689.1,601.7 693.5,602.4 697.6,603.2 701.5,604.3 705.0,605.5 708.3,607.0 711.1,608.6 713.6,610.3 715.7,612.3 717.4,614.3 718.7,616.5 719.5,618.7 719.9,621.1 719.8,623.5 719.3,626.0 718.4,628.5 717.0,631.0 715.2,633.5 713.0,636.0" fill="#434d7e" stroke="none" stroke-width="0" stroke-linejoin="round" />
<defs><linearGradient id="gH" gradientUnits="userSpaceOnUse" x1="606" y1="630" x2="720" y2="612"><stop offset="0" stop-color="#383f69"/><stop offset="0.450" stop-color="#434d7e"/><stop offset="0.720" stop-color="#495389"/><stop offset="0.730" stop-color="#505b96"/><stop offset="1" stop-color="#54609f"/></linearGradient></defs>
<polygon points="713.0,636.0 710.4,638.4 707.4,640.7 704.1,643.0 700.4,645.2 696.5,647.2 692.3,649.2 687.8,650.9 683.2,652.6 678.4,654.0 673.5,655.3 668.4,656.3 663.3,657.2 658.3,657.8 653.2,658.3 648.2,658.5 643.3,658.5 638.5,658.3 633.9,657.9 629.5,657.2 625.4,656.4 621.5,655.3 618.0,654.1 614.7,652.6 611.9,651.0 609.4,649.3 607.3,647.3 605.6,645.3 604.3,643.1 603.5,640.9 603.1,638.5 603.2,636.1 603.7,633.6 604.6,631.1 606.0,628.6 607.8,626.1 610.0,623.6 612.6,621.2 615.6,618.9 618.9,616.6 622.6,614.4 626.5,612.4 630.7,610.4 635.2,608.7 639.8,607.0 644.6,605.6 649.5,604.3 654.6,603.3 659.7,602.4 664.7,601.8 669.8,601.3 674.8,601.1 679.7,601.1 684.5,601.3 689.1,601.7 693.5,602.4 697.6,603.2 701.5,604.3 705.0,605.5 708.3,607.0 711.1,608.6 713.6,610.3 715.7,612.3 717.4,614.3 718.7,616.5 719.5,618.7 719.9,621.1 719.8,623.5 719.3,626.0 718.4,628.5 717.0,631.0 715.2,633.5 713.0,636.0" fill="url(#gH)" stroke="none" stroke-width="0" stroke-linejoin="round" />
<polygon points="611.0,646.0 614.1,642.7 628.5,640.2 634.4,635.1 656.4,630.0 712.0,636.5 725.0,640.0 700.0,662.0 660.0,672.0 620.0,668.0 606.0,655.0" fill="#373e67" stroke="#0c0f1c" stroke-width="0.7" stroke-linejoin="round" />
<polygon points="655.5,624.5 659.8,622.4 688.5,620.7 719.5,627.2 722.0,633.0 713.0,635.6 657.3,628.6" fill="#6375bd" stroke="#0c0f1c" stroke-width="0.7" stroke-linejoin="round" />
<polygon points="657.3,628.6 713.0,635.6 712.0,637.3 656.4,630.2" fill="#2e3557" stroke="#0c0f1c" stroke-width="0.4" stroke-linejoin="round" />
<polygon points="620.0,637.0 633.5,630.0 634.4,635.1 628.5,640.2 615.8,642.0" fill="#475186" stroke="#0c0f1c" stroke-width="0.6" stroke-linejoin="round" />
<polygon points="655.5,624.5 659.8,622.4 657.3,628.6 653.5,627.5" fill="#525d99" stroke="#0c0f1c" stroke-width="0.5" stroke-linejoin="round" />
<polyline points="688.5,603.0 691.6,620.9" fill="none" stroke="#0c0f1c" stroke-width="0.8" stroke-linejoin="round" stroke-linecap="round" />
<polyline points="611.0,646.0 612.5,655.0" fill="none" stroke="#0c0f1c" stroke-width="0.7" stroke-linejoin="round" stroke-linecap="round" />
</g>
<polygon points="713.0,636.0 710.4,638.4 707.4,640.7 704.1,643.0 700.4,645.2 696.5,647.2 692.3,649.2 687.8,650.9 683.2,652.6 678.4,654.0 673.5,655.3 668.4,656.3 663.3,657.2 658.3,657.8 653.2,658.3 648.2,658.5 643.3,658.5 638.5,658.3 633.9,657.9 629.5,657.2 625.4,656.4 621.5,655.3 618.0,654.1 614.7,652.6 611.9,651.0 609.4,649.3 607.3,647.3 605.6,645.3 604.3,643.1 603.5,640.9 603.1,638.5 603.2,636.1 603.7,633.6 604.6,631.1 606.0,628.6 607.8,626.1 610.0,623.6 612.6,621.2 615.6,618.9 618.9,616.6 622.6,614.4 626.5,612.4 630.7,610.4 635.2,608.7 639.8,607.0 644.6,605.6 649.5,604.3 654.6,603.3 659.7,602.4 664.7,601.8 669.8,601.3 674.8,601.1 679.7,601.1 684.5,601.3 689.1,601.7 693.5,602.4 697.6,603.2 701.5,604.3 705.0,605.5 708.3,607.0 711.1,608.6 713.6,610.3 715.7,612.3 717.4,614.3 718.7,616.5 719.5,618.7 719.9,621.1 719.8,623.5 719.3,626.0 718.4,628.5 717.0,631.0 715.2,633.5 713.0,636.0" fill="none" stroke="#0c0f1c" stroke-width="0.900"/>
<g stroke="#f4f4f4" stroke-width="1.400" fill="none" stroke-linecap="round"><path d="M863.400 267L855.700 146M863.400 267L977 280.600M863.400 267L800.600 308"/></g>
<path d="M854.600 125.600L857.900 145.500L852.800 145.700z" fill="#12a85a"/>
<path d="M995.500 283.900L976.500 283.800L977 277.500z" fill="#e8262a"/>
<path d="M792 313.400L799.300 306.600L801.800 310z" fill="#5a74d8" opacity="0.900"/>
<g stroke="#f4f4f4" stroke-width="1.500" fill="none" stroke-linecap="round"><path d="M797.800 515L821 518.500M797.800 515L784.600 534.500M797.800 515L803 536"/></g>
<circle cx="821.400" cy="518.500" r="0.900" fill="#e8262a"/><circle cx="784.300" cy="535" r="0.900" fill="#12a85a"/>
<text x="1002" y="294" font-family="Liberation Sans, sans-serif" font-size="14" fill="#f4f4f4" textLength="53" lengthAdjust="spacingAndGlyphs">Local CS</text>
<text x="755" y="503.800" font-family="Liberation Sans, sans-serif" font-size="14" fill="#f4f4f4" textLength="61" lengthAdjust="spacingAndGlyphs">Global CS</text>
<polygon points="442.2,671.0 466.4,655.6 511.8,660.5 488.1,677.0" fill="#2b2b2b" stroke="#454545" stroke-width="0.8" stroke-linejoin="round" />
<polygon points="442.2,671.0 488.1,677.0 490.7,725.8 445.2,719.9" fill="#2e2e2e" stroke="#454545" stroke-width="0.8" stroke-linejoin="round" />
<polygon points="488.1,677.0 511.8,660.5 514.8,709.4 490.7,725.8" fill="#2a2a2a" stroke="#454545" stroke-width="0.8" stroke-linejoin="round" />
<text font-family="Liberation Sans, sans-serif" font-size="12.500" fill="#f0f0f0" transform="matrix(0.980 0.140 0.040 1 456.500 701.600)">Top</text>
<text font-family="Liberation Sans, sans-serif" font-size="11" font-weight="bold" fill="#e8e8e8" transform="matrix(0.080 -1 0.700 -0.450 505 708.500)">Right</text>
<text font-family="Liberation Sans, sans-serif" font-size="10" font-weight="bold" fill="#d8d8d8" transform="matrix(-0.950 -0.110 0.600 -0.360 490.500 667.500)">Back</text>
<path d="M466.300 647.500L466.900 655.500" stroke="#22b868" stroke-width="1.600"/><path d="M515.500 709.800L522 710" stroke="#e0004d" stroke-width="1.600"/><path d="M441.200 722.200L445.600 720" stroke="#1560e0" stroke-width="1.600"/>
<text x="460" y="640.500" font-family="Liberation Sans, sans-serif" font-size="14" fill="#22c06a">Y</text>
<text x="528.500" y="716.500" font-family="Liberation Sans, sans-serif" font-size="14" fill="#e0004d">X</text>
<text x="431" y="731" font-family="Liberation Sans, sans-serif" font-size="14" fill="#1560e0">Z</text>
</svg>
<div id="title">
 <!-- logo -->
 <svg style="left:11px;top:10px" width="22" height="22" viewBox="0 0 22 22" fill="none" stroke="#00dfa4" stroke-width="2.1" stroke-linecap="round" stroke-linejoin="round">
  <path d="M9.2 1.9H5.4a3.6 3.6 0 0 0-3.6 3.6v0a3.6 3.6 0 0 0 3.6 3.6h3.8M9.2 1.9L5.6 5.6"/>
  <path d="M12.7 9.1V5.5a3.6 3.6 0 0 1 3.6-3.6v0a3.6 3.6 0 0 1 3.6 3.6v3.6"/>
  <path d="M9.2 12.9H5.4a3.6 3.6 0 0 0-3.6 3.6v0a3.6 3.6 0 0 0 3.6 3.6h3.8"/>
  <path d="M12.7 12.9l4.2 4.2M19.9 12.9v3.6a3.6 3.6 0 0 1-3.6 3.6h-3.6"/>
 </svg>
 <!-- hamburger -->
 <div class="abs" style="left:57px;top:15px;width:15px;height:2px;background:#f2f2f2"></div>
 <div class="abs" style="left:57px;top:20px;width:15px;height:2px;background:#f2f2f2"></div>
 <div class="abs" style="left:57px;top:25px;width:15px;height:2px;background:#f2f2f2"></div>
 <!-- new doc -->
 <svg style="left:100px;top:12px" width="16" height="18" viewBox="0 0 16 18"><path d="M1 1h8.5L15.2 6.7V17H1z" fill="#ececec"/><path d="M9.5 1v5.7h5.7z" fill="#2e2e31"/><path d="M10.3 1.2l4.7 4.7h-4.7z" fill="#ececec"/></svg>
 <!-- open folder -->
 <svg style="left:140px;top:13px" width="21" height="16" viewBox="0 0 21 16"><path d="M1 15V2.2q0-1.2 1.2-1.2h4.6l1.8 1.8h7.6q1.2 0 1.2 1.2v1.6H5.6z" fill="#cfcfcf"/><path d="M1.6 15L5.2 6.2h15.2L16.8 15z" fill="#ececec"/></svg>
 <!-- save -->
 <svg style="left:186px;top:12px" width="17" height="18" viewBox="0 0 17 18"><path d="M1 1h12.5L16.2 3.7V17H1z" fill="#ececec"/><rect x="4" y="1" width="8.6" height="5.2" fill="#2e2e31"/><rect x="9.3" y="1.8" width="2.2" height="3.6" fill="#ececec"/><rect x="3.6" y="9" width="10" height="8" fill="#2e2e31"/><rect x="4.8" y="10.2" width="7.6" height="6.8" fill="#8a8a8a"/></svg>
 <div class="abs" style="left:217px;top:8px;width:1px;height:26px;background:#4c4c4f"></div>
 <div id="proj">New project</div>
 <svg style="left:389px;top:16px" width="12" height="11" viewBox="0 0 12 11" fill="none" stroke="#d8d8d8" stroke-width="1.2"><rect x="1.6" y="1.6" width="8.8" height="5.6" rx="1.2"/><path d="M0.6 9.6h10.8"/></svg>
 <!-- window controls -->
 <svg style="left:1000px;top:10px" width="160" height="24" viewBox="0 0 160 24" fill="none" stroke="#f4f4f4" stroke-width="1.3" stroke-linecap="round" stroke-linejoin="round">
  <path d="M4 7l7 6.4L18 7"/>
  <path d="M48 11.4h12"/>
  <rect x="91.6" y="5.6" width="11.4" height="11.2" rx="1.6"/>
  <path d="M135.4 6.2l9.6 10M145 6.2l-9.6 10"/>
 </svg>
</div>

<div class="panel" style="left:8px;top:49px;width:393.5px;height:367px"></div>
<div class="tab on" style="left:13px;width:126px">Model</div>
<div class="tab" style="left:141px;width:127px">Machining</div>
<div class="tab" style="left:269px;width:127px">Simulation</div>
<div class="inner" style="left:13px;top:92px;width:383px;height:319px"></div>
<svg style="left:23px;top:101px" width="24" height="22" viewBox="0 0 24 22">
 <g fill="none" stroke="#f2f2f2" stroke-width="1.3"><path d="M3 4.5h11M3 4.5v14M3 18.500h15.5M18.5 18.5V10"/></g>
 <g fill="#28282a" stroke="#f2f2f2" stroke-width="1.2"><rect x="0.8" y="2.3" width="4.4" height="4.4"/><rect x="0.8" y="16.300" width="4.4" height="4.4"/><rect x="16.3" y="16.3" width="4.400" height="4.4"/></g>
 <path d="M7.200 14.800L8.200 11.200L17.600 1.800Q19 0.600 20.400 1.900Q21.600 3.200 20.500 4.600L11 14z" fill="#17c39a"/><path d="M7.200 14.800L8 11.800L10.400 14z" fill="#0c7d62"/>
</svg>
<svg style="left:57px;top:101px" width="27" height="23" viewBox="0 0 27 23">
 <path d="M12 1.200L22.500 5.800L12 10.800L1.500 5.800z" fill="#f4f4f4"/><path d="M1.500 5.800L12 10.800V22.400L1.500 17z" fill="#dcdcdc"/><path d="M12 10.800L22.500 5.800V17L12 22.400z" fill="#bdbdbd"/>
 <circle cx="21" cy="6.400" r="4.600" fill="#28282a"/><g stroke="#17c39a" stroke-width="1.100" fill="none"><circle cx="21" cy="6.400" r="2.900"/><path d="M21 2.200v8.400M16.800 6.400h8.400"/></g>
</svg>
<svg style="left:94px;top:102px" width="23" height="20" viewBox="0 0 23 20"><path d="M8.800 0.800h5L22.200 19.200h-4.600L11.400 5L5.200 19.200H0.800z" fill="#d4d4d4"/><path d="M5.800 13.600c3.600-2.200 7.600-2.200 11.200 0l1.400 3.400c-4.400-2.600-9.600-2.600-14 0z" fill="#d4d4d4"/><path d="M0.800 19.200h4.400l0.400-1h-4.400zM17.600 19.200h4.600l-0.400-1h-4.600z" fill="#9a9a9a"/></svg>
<svg style="left:129px;top:102px" width="24" height="20" viewBox="0 0 24 20"><path d="M0.600 3.400Q0.600 0.800 3.200 0.800h5.600Q11 0.800 11 3v0.400z" fill="#17c39a"/><path d="M0.600 4.600h20.200Q23.400 4.600 23.400 7.200v9.600Q23.400 19.400 20.800 19.400H3.200Q0.600 19.400 0.600 16.800z" fill="#dedede"/><path d="M12 8.200v7.600M8.200 12h7.600" stroke="#1a1a1a" stroke-width="1.700" fill="none"/></svg>
<div class="abs" style="left:326px;top:106px;font-size:12.3px;font-weight:bold;line-height:15px;color:#f4f4f4">Import</div>
<svg style="left:377px;top:110px" width="10" height="6" viewBox="0 0 10 6"><path d="M0.300 0.200h9.400L5 5.200z" fill="#f4f4f4"/></svg>
<svg style="left:32px;top:146px" width="13" height="13" viewBox="0 0 13 13"><rect x="0.500" y="0.500" width="12" height="12" rx="2.200" fill="#15b08a" stroke="#0d8a6c"/><path d="M3.200 6.600l2.400 2.500L10 4.300" fill="none" stroke="#fff" stroke-width="1.700" stroke-linecap="round" stroke-linejoin="round"/></svg>
<svg style="left:49px;top:146px" width="14" height="12" viewBox="0 0 14 12"><path d="M1.600 2.200Q1.600 0.400 3.400 0.400h3.400Q8.400 0.400 8.400 2v0.800H1.600z" fill="#c8c8c8"/><path d="M0.400 3.600Q0.400 2.400 1.600 2.400h10.800Q13.600 2.400 13.600 3.600v6.800Q13.600 11.600 12.400 11.600H1.600Q0.400 11.600 0.400 10.400z" fill="#f6e68c"/></svg>
<div class="row" style="left:67px;top:141px;color:#f2f2f2">Full Model</div>
<svg style="left:27px;top:171px" width="10" height="7" viewBox="0 0 10 7"><path d="M0.800 1l4.200 4.400L9.200 1" fill="none" stroke="#d0d0d0" stroke-width="1.200" stroke-linecap="round" stroke-linejoin="round"/></svg>
<svg style="left:43px;top:168px" width="13" height="13" viewBox="0 0 13 13"><rect x="0.500" y="0.500" width="12" height="12" rx="2.200" fill="#15b08a" stroke="#0d8a6c"/><path d="M3.200 6.600l2.400 2.500L10 4.300" fill="none" stroke="#fff" stroke-width="1.700" stroke-linecap="round" stroke-linejoin="round"/></svg>
<svg style="left:60px;top:168px" width="14" height="12" viewBox="0 0 14 12"><path d="M1.600 2.200Q1.600 0.400 3.400 0.400h3.400Q8.400 0.400 8.400 2v0.800H1.600z" fill="#c8c8c8"/><path d="M0.400 3.600Q0.400 2.400 1.600 2.400h10.800Q13.600 2.400 13.600 3.600v6.800Q13.600 11.600 12.400 11.600H1.600Q0.400 11.600 0.400 10.400z" fill="#f6e68c"/></svg>
<div class="row" style="left:78px;top:163px;color:#f2f2f2">Part</div>
<svg style="left:38px;top:193px" width="10" height="7" viewBox="0 0 10 7"><path d="M0.800 1l4.200 4.400L9.200 1" fill="none" stroke="#d0d0d0" stroke-width="1.200" stroke-linecap="round" stroke-linejoin="round"/></svg>
<svg style="left:54px;top:190px" width="13" height="13" viewBox="0 0 13 13"><rect x="0.500" y="0.500" width="12" height="12" rx="2.200" fill="#15b08a" stroke="#0d8a6c"/><path d="M3.200 6.600l2.400 2.500L10 4.300" fill="none" stroke="#fff" stroke-width="1.700" stroke-linecap="round" stroke-linejoin="round"/></svg>
<svg style="left:71px;top:189px" width="15" height="16" viewBox="0 0 15 16"><path d="M1.400 0.600h6.400L12 4.800V15H1.400z" fill="#76cdb6"/><path d="M7.800 0.600v4.200H12z" fill="#4aa890"/><rect x="1.600" y="6" width="13.200" height="7.200" rx="1" fill="#2c2c30"/><text x="2.200" y="12.300" font-family="Liberation Sans, sans-serif" font-size="7.200" font-weight="bold" fill="#f4f4f4" textLength="12" lengthAdjust="spacingAndGlyphs">STP</text></svg>
<div class="row" style="left:89px;top:185px;color:#f2f2f2">Kooa.stp</div>
<svg style="left:49px;top:215px" width="10" height="7" viewBox="0 0 10 7"><path d="M0.800 1l4.200 4.400L9.200 1" fill="none" stroke="#d0d0d0" stroke-width="1.200" stroke-linecap="round" stroke-linejoin="round"/></svg>
<svg style="left:65px;top:212px" width="13" height="13" viewBox="0 0 13 13"><rect x="0.500" y="0.500" width="12" height="12" rx="2.200" fill="#15b08a" stroke="#0d8a6c"/><path d="M3.200 6.600l2.400 2.500L10 4.300" fill="none" stroke="#fff" stroke-width="1.700" stroke-linecap="round" stroke-linejoin="round"/></svg>
<svg style="left:82px;top:212px" width="14" height="12" viewBox="0 0 14 12"><path d="M1.600 2.200Q1.600 0.400 3.400 0.400h3.400Q8.400 0.400 8.400 2v0.800H1.600z" fill="#c8c8c8"/><path d="M0.400 3.600Q0.400 2.400 1.600 2.400h10.800Q13.600 2.400 13.600 3.600v6.800Q13.600 11.600 12.400 11.600H1.600Q0.400 11.600 0.400 10.400z" fill="#f6e68c"/></svg>
<div class="row" style="left:100px;top:207px;color:#f2f2f2">1</div>
<div class="abs" style="left:27px;top:230px;width:357px;height:21px;background:#000"></div>
<svg style="left:76px;top:234px" width="13" height="13" viewBox="0 0 13 13"><rect x="0.500" y="0.500" width="12" height="12" rx="2.200" fill="#15b08a" stroke="#0d8a6c"/><path d="M3.200 6.600l2.400 2.500L10 4.300" fill="none" stroke="#fff" stroke-width="1.700" stroke-linecap="round" stroke-linejoin="round"/></svg>
<svg style="left:93px;top:234px" width="14" height="12" viewBox="0 0 14 12"><path d="M1.600 2.200Q1.600 0.400 3.400 0.400h3.400Q8.400 0.400 8.400 2v0.800H1.600z" fill="#c8c8c8"/><path d="M0.400 3.600Q0.400 2.400 1.600 2.400h10.800Q13.600 2.400 13.600 3.600v6.800Q13.600 11.600 12.400 11.600H1.600Q0.400 11.600 0.400 10.400z" fill="#f6e68c"/></svg>
<div class="row" style="left:111px;top:229px;color:#2fb58c">shell_384</div>
<svg style="left:43px;top:256px" width="13" height="13" viewBox="0 0 13 13"><rect x="0.500" y="0.500" width="12" height="12" rx="2.200" fill="#15b08a" stroke="#0d8a6c"/><path d="M3.200 6.600l2.400 2.500L10 4.300" fill="none" stroke="#fff" stroke-width="1.700" stroke-linecap="round" stroke-linejoin="round"/></svg>
<svg style="left:60px;top:256px" width="14" height="12" viewBox="0 0 14 12"><path d="M1.600 2.200Q1.600 0.400 3.400 0.400h3.400Q8.400 0.400 8.400 2v0.800H1.600z" fill="#c8c8c8"/><path d="M0.400 3.600Q0.400 2.400 1.600 2.400h10.800Q13.600 2.400 13.600 3.600v6.800Q13.600 11.600 12.400 11.600H1.600Q0.400 11.600 0.400 10.400z" fill="#f6e68c"/></svg>
<div class="row" style="left:78px;top:251px;color:#f2f2f2">Workpiece</div>
<svg style="left:43px;top:278px" width="13" height="13" viewBox="0 0 13 13"><rect x="0.500" y="0.500" width="12" height="12" rx="2.200" fill="#15b08a" stroke="#0d8a6c"/><path d="M3.200 6.600l2.400 2.500L10 4.300" fill="none" stroke="#fff" stroke-width="1.700" stroke-linecap="round" stroke-linejoin="round"/></svg>
<svg style="left:60px;top:278px" width="14" height="12" viewBox="0 0 14 12"><path d="M1.600 2.200Q1.600 0.400 3.400 0.400h3.400Q8.400 0.400 8.400 2v0.800H1.600z" fill="#c8c8c8"/><path d="M0.400 3.600Q0.400 2.400 1.600 2.400h10.800Q13.600 2.400 13.600 3.600v6.800Q13.600 11.600 12.400 11.600H1.600Q0.400 11.600 0.400 10.400z" fill="#f6e68c"/></svg>
<div class="row" style="left:78px;top:273px;color:#f2f2f2">Fixtures</div>
<svg style="left:43px;top:300px" width="13" height="13" viewBox="0 0 13 13"><rect x="0.500" y="0.500" width="12" height="12" rx="2.200" fill="#15b08a" stroke="#0d8a6c"/><path d="M3.200 6.600l2.400 2.500L10 4.300" fill="none" stroke="#fff" stroke-width="1.700" stroke-linecap="round" stroke-linejoin="round"/></svg>
<svg style="left:60px;top:300px" width="14" height="12" viewBox="0 0 14 12"><path d="M1.600 2.200Q1.600 0.400 3.400 0.400h3.400Q8.400 0.400 8.400 2v0.800H1.600z" fill="#c8c8c8"/><path d="M0.400 3.600Q0.400 2.400 1.600 2.400h10.800Q13.600 2.400 13.600 3.600v6.800Q13.600 11.600 12.400 11.600H1.600Q0.400 11.600 0.400 10.400z" fill="#f6e68c"/></svg>
<div class="row" style="left:78px;top:295px;color:#f2f2f2">Restrictions</div>
<div class="panel" style="left:8px;top:422px;width:393.5px;height:340px"></div>
<div class="inner" style="left:13px;top:443px;width:383px;height:313px;border-radius:0 6px 6px 6px"></div>
<div class="inner" style="left:58px;top:427px;width:338px;height:20px;border-radius:0 6px 0 0"></div>
<div class="abs" style="left:14px;top:428px;width:40px;height:11px;border-radius:4px;background:#1e1e1a"></div>
<div class="abs" style="left:27px;top:448px;font-size:14.5px;font-weight:bold;line-height:18px;color:#f6f6f6">shell_384</div>
<svg style="left:112px;top:450px" width="14" height="14" viewBox="0 0 14 14"><path fill-rule="evenodd" d="M12.04,5.71 L13.90,5.82 L13.90,8.18 L12.04,8.29 L11.47,9.65 L12.72,11.04 L11.04,12.72 L9.65,11.47 L8.29,12.04 L8.18,13.90 L5.82,13.90 L5.71,12.04 L4.35,11.47 L2.96,12.72 L1.28,11.04 L2.53,9.65 L1.96,8.29 L0.10,8.18 L0.10,5.82 L1.96,5.71 L2.53,4.35 L1.28,2.96 L2.96,1.28 L4.35,2.53 L5.71,1.96 L5.82,0.10 L8.18,0.10 L8.29,1.96 L9.65,2.53 L11.04,1.28 L12.72,2.96 L11.47,4.35 z M7 4.600a2.400 2.400 0 1 0 0.010 0z" fill="#ececec"/></svg>
<svg style="left:144px;top:450px" width="11" height="14" viewBox="0 0 11 14"><path d="M5.500 0.600C7.600 3.800 10.300 6.400 10.300 9A4.800 4.800 0 0 1 0.700 9C0.700 6.400 3.400 3.800 5.500 0.600z" fill="#ececec"/><path d="M5.700 6.400c1 1.400 1.800 2.400 1.800 3.600a1.800 1.800 0 0 1-1.800 1.800z" fill="#28282a"/></svg>
<svg style="left:172px;top:451px" width="19" height="12" viewBox="0 0 19 12"><path d="M0.600 6C3 2.200 6 0.800 9.500 0.800S16 2.200 18.400 6C16 9.800 13 11.200 9.500 11.200S3 9.800 0.600 6z" fill="#ececec"/><circle cx="9.500" cy="6" r="3.700" fill="#28282a"/><circle cx="9.500" cy="6" r="2.500" fill="#ececec"/><path d="M9.500 6V3.500A2.500 2.500 0 0 1 12 6z" fill="#28282a"/></svg>
<svg style="left:206px;top:451px" width="12" height="12" viewBox="0 0 12 12"><path d="M1.200 1.200l9.600 9.600M10.800 1.200l-9.600 9.600" stroke="#ececec" stroke-width="1.500" fill="none"/></svg>
<svg style="left:28px;top:477px" width="15" height="16" viewBox="0 0 15 16"><path d="M7.400 0.600Q10.800 3 14.400 4.600L9.400 15.400Q5.600 11.600 0.600 8.800z" fill="#17675a" stroke="#1f7a6a" stroke-width="0.600"/></svg>
<div class="face" style="left:45px;top:476.0px">Face</div>
<svg style="left:28px;top:494px" width="15" height="16" viewBox="0 0 15 16"><path d="M7.400 0.600Q10.800 3 14.400 4.600L9.400 15.400Q5.600 11.600 0.600 8.800z" fill="#17675a" stroke="#1f7a6a" stroke-width="0.600"/></svg>
<div class="face" style="left:45px;top:493.0px">Face_2</div>
<svg style="left:28px;top:511px" width="15" height="16" viewBox="0 0 15 16"><path d="M7.400 0.600Q10.800 3 14.400 4.600L9.400 15.400Q5.600 11.600 0.600 8.800z" fill="#17675a" stroke="#1f7a6a" stroke-width="0.600"/></svg>
<div class="face" style="left:45px;top:510.0px">Face_3</div>
<svg style="left:28px;top:528px" width="15" height="16" viewBox="0 0 15 16"><path d="M7.400 0.600Q10.800 3 14.400 4.600L9.400 15.400Q5.600 11.600 0.600 8.800z" fill="#17675a" stroke="#1f7a6a" stroke-width="0.600"/></svg>
<div class="face" style="left:45px;top:527.0px">Face_4</div>
<svg style="left:28px;top:545px" width="15" height="16" viewBox="0 0 15 16"><path d="M7.400 0.600Q10.800 3 14.400 4.600L9.400 15.400Q5.600 11.600 0.600 8.800z" fill="#17675a" stroke="#1f7a6a" stroke-width="0.600"/></svg>
<div class="face" style="left:45px;top:544.0px">Face_5</div>
<svg style="left:28px;top:562px" width="15" height="16" viewBox="0 0 15 16"><path d="M7.400 0.600Q10.800 3 14.400 4.600L9.400 15.400Q5.600 11.600 0.600 8.800z" fill="#17675a" stroke="#1f7a6a" stroke-width="0.600"/></svg>
<div class="face" style="left:45px;top:561.0px">Face_6</div>
<svg style="left:28px;top:579px" width="15" height="16" viewBox="0 0 15 16"><path d="M7.400 0.600Q10.800 3 14.400 4.600L9.400 15.400Q5.600 11.600 0.600 8.800z" fill="#17675a" stroke="#1f7a6a" stroke-width="0.600"/></svg>
<div class="face" style="left:45px;top:578.0px">Face_7</div>
<svg style="left:28px;top:596px" width="15" height="16" viewBox="0 0 15 16"><path d="M7.400 0.600Q10.800 3 14.400 4.600L9.400 15.400Q5.600 11.600 0.600 8.800z" fill="#17675a" stroke="#1f7a6a" stroke-width="0.600"/></svg>
<div class="face" style="left:45px;top:595.0px">Face_8</div>
<svg style="left:28px;top:613px" width="15" height="16" viewBox="0 0 15 16"><path d="M7.400 0.600Q10.800 3 14.400 4.600L9.400 15.400Q5.600 11.600 0.600 8.800z" fill="#17675a" stroke="#1f7a6a" stroke-width="0.600"/></svg>
<div class="face" style="left:45px;top:612.0px">Face_9</div>
<svg style="left:28px;top:630px" width="15" height="16" viewBox="0 0 15 16"><path d="M7.400 0.600Q10.800 3 14.400 4.600L9.400 15.400Q5.600 11.600 0.600 8.800z" fill="#17675a" stroke="#1f7a6a" stroke-width="0.600"/></svg>
<div class="face" style="left:45px;top:629.0px">Face_10</div>
<svg style="left:28px;top:647px" width="15" height="16" viewBox="0 0 15 16"><path d="M7.400 0.600Q10.800 3 14.400 4.600L9.400 15.400Q5.600 11.600 0.600 8.800z" fill="#17675a" stroke="#1f7a6a" stroke-width="0.600"/></svg>
<div class="face" style="left:45px;top:646.0px">Face_11</div>
<svg style="left:28px;top:664px" width="15" height="16" viewBox="0 0 15 16"><path d="M7.400 0.600Q10.800 3 14.400 4.600L9.400 15.400Q5.600 11.600 0.600 8.800z" fill="#17675a" stroke="#1f7a6a" stroke-width="0.600"/></svg>
<div class="face" style="left:45px;top:663.0px">Face_12</div>
<svg style="left:28px;top:681px" width="15" height="16" viewBox="0 0 15 16"><path d="M7.400 0.600Q10.800 3 14.400 4.600L9.400 15.400Q5.600 11.600 0.600 8.800z" fill="#17675a" stroke="#1f7a6a" stroke-width="0.600"/></svg>
<div class="face" style="left:45px;top:680.0px">Face_13</div>
<svg style="left:28px;top:698px" width="15" height="16" viewBox="0 0 15 16"><path d="M7.400 0.600Q10.800 3 14.400 4.600L9.400 15.400Q5.600 11.600 0.600 8.800z" fill="#17675a" stroke="#1f7a6a" stroke-width="0.600"/></svg>
<div class="face" style="left:45px;top:697.0px">Face_14</div>
<svg style="left:28px;top:715px" width="15" height="16" viewBox="0 0 15 16"><path d="M7.400 0.600Q10.800 3 14.400 4.600L9.400 15.400Q5.600 11.600 0.600 8.800z" fill="#17675a" stroke="#1f7a6a" stroke-width="0.600"/></svg>
<div class="face" style="left:45px;top:714.0px">Face_15</div>
<svg style="left:156px;top:477px" width="15" height="16" viewBox="0 0 15 16"><path d="M7.400 0.600Q10.800 3 14.400 4.600L9.400 15.400Q5.600 11.600 0.600 8.800z" fill="#17675a" stroke="#1f7a6a" stroke-width="0.600"/></svg>
<div class="face" style="left:173px;top:476.0px">Face_16</div>
<svg style="left:156px;top:494px" width="15" height="16" viewBox="0 0 15 16"><path d="M7.400 0.600Q10.800 3 14.400 4.600L9.400 15.400Q5.600 11.600 0.600 8.800z" fill="#17675a" stroke="#1f7a6a" stroke-width="0.600"/></svg>
<div class="face" style="left:173px;top:493.0px">Face_17</div>
<svg style="left:156px;top:511px" width="15" height="16" viewBox="0 0 15 16"><path d="M7.400 0.600Q10.800 3 14.400 4.600L9.400 15.400Q5.600 11.600 0.600 8.800z" fill="#17675a" stroke="#1f7a6a" stroke-width="0.600"/></svg>
<div class="face" style="left:173px;top:510.0px">Face_18</div>
<svg style="left:156px;top:528px" width="15" height="16" viewBox="0 0 15 16"><path d="M7.400 0.600Q10.800 3 14.400 4.600L9.400 15.400Q5.600 11.600 0.600 8.800z" fill="#17675a" stroke="#1f7a6a" stroke-width="0.600"/></svg>
<div class="face" style="left:173px;top:527.0px">Face_19</div>
<svg style="left:156px;top:545px" width="15" height="16" viewBox="0 0 15 16"><path d="M7.400 0.600Q10.800 3 14.400 4.600L9.400 15.400Q5.600 11.600 0.600 8.800z" fill="#17675a" stroke="#1f7a6a" stroke-width="0.600"/></svg>
<div class="face" style="left:173px;top:544.0px">Face_20</div>
<svg style="left:156px;top:562px" width="15" height="16" viewBox="0 0 15 16"><path d="M7.400 0.600Q10.800 3 14.400 4.600L9.400 15.400Q5.600 11.600 0.600 8.800z" fill="#17675a" stroke="#1f7a6a" stroke-width="0.600"/></svg>
<div class="face" style="left:173px;top:561.0px">Face_21</div>
<svg style="left:156px;top:579px" width="15" height="16" viewBox="0 0 15 16"><path d="M7.400 0.600Q10.800 3 14.400 4.600L9.400 15.400Q5.600 11.600 0.600 8.800z" fill="#17675a" stroke="#1f7a6a" stroke-width="0.600"/></svg>
<div class="face" style="left:173px;top:578.0px">Face_22</div>
<svg style="left:156px;top:596px" width="15" height="16" viewBox="0 0 15 16"><path d="M7.400 0.600Q10.800 3 14.400 4.600L9.400 15.400Q5.600 11.600 0.600 8.800z" fill="#17675a" stroke="#1f7a6a" stroke-width="0.600"/></svg>
<div class="face" style="left:173px;top:595.0px">Face_23</div>
<svg style="left:156px;top:613px" width="15" height="16" viewBox="0 0 15 16"><path d="M7.400 0.600Q10.800 3 14.400 4.600L9.400 15.400Q5.600 11.600 0.600 8.800z" fill="#17675a" stroke="#1f7a6a" stroke-width="0.600"/></svg>
<div class="face" style="left:173px;top:612.0px">Face_24</div>
<svg style="left:156px;top:630px" width="15" height="16" viewBox="0 0 15 16"><path d="M7.400 0.600Q10.800 3 14.400 4.600L9.400 15.400Q5.600 11.600 0.600 8.800z" fill="#17675a" stroke="#1f7a6a" stroke-width="0.600"/></svg>
<div class="face" style="left:173px;top:629.0px">Face_25</div>
<svg style="left:156px;top:647px" width="15" height="16" viewBox="0 0 15 16"><path d="M7.400 0.600Q10.800 3 14.400 4.600L9.400 15.400Q5.600 11.600 0.600 8.800z" fill="#17675a" stroke="#1f7a6a" stroke-width="0.600"/></svg>
<div class="face" style="left:173px;top:646.0px">Face_26</div>
<svg style="left:156px;top:664px" width="15" height="16" viewBox="0 0 15 16"><path d="M7.400 0.600Q10.800 3 14.400 4.600L9.400 15.400Q5.600 11.600 0.600 8.800z" fill="#17675a" stroke="#1f7a6a" stroke-width="0.600"/></svg>
<div class="face" style="left:173px;top:663.0px">Face_27</div>
<svg style="left:156px;top:681px" width="15" height="16" viewBox="0 0 15 16"><path d="M7.400 0.600Q10.800 3 14.400 4.600L9.400 15.400Q5.600 11.600 0.600 8.800z" fill="#17675a" stroke="#1f7a6a" stroke-width="0.600"/></svg>
<div class="face" style="left:173px;top:680.0px">Face_28</div>
<svg style="left:156px;top:698px" width="15" height="16" viewBox="0 0 15 16"><path d="M7.400 0.600Q10.800 3 14.400 4.600L9.400 15.400Q5.600 11.600 0.600 8.800z" fill="#17675a" stroke="#1f7a6a" stroke-width="0.600"/></svg>
<div class="face" style="left:173px;top:697.0px">Face_29</div>
<svg style="left:156px;top:715px" width="15" height="16" viewBox="0 0 15 16"><path d="M7.400 0.600Q10.800 3 14.400 4.600L9.400 15.400Q5.600 11.600 0.600 8.800z" fill="#17675a" stroke="#1f7a6a" stroke-width="0.600"/></svg>
<div class="face" style="left:173px;top:714.0px">Face_30</div>
<svg style="left:284px;top:477px" width="15" height="16" viewBox="0 0 15 16"><path d="M7.400 0.600Q10.800 3 14.400 4.600L9.400 15.400Q5.600 11.600 0.600 8.800z" fill="#17675a" stroke="#1f7a6a" stroke-width="0.600"/></svg>
<div class="face" style="left:301px;top:476.0px">Face_31</div>
<svg style="left:284px;top:494px" width="15" height="16" viewBox="0 0 15 16"><path d="M7.400 0.600Q10.800 3 14.400 4.600L9.400 15.400Q5.600 11.600 0.600 8.800z" fill="#17675a" stroke="#1f7a6a" stroke-width="0.600"/></svg>
<div class="face" style="left:301px;top:493.0px">Face_32</div>
<svg style="left:284px;top:511px" width="15" height="16" viewBox="0 0 15 16"><path d="M7.400 0.600Q10.800 3 14.400 4.600L9.400 15.400Q5.600 11.600 0.600 8.800z" fill="#17675a" stroke="#1f7a6a" stroke-width="0.600"/></svg>
<div class="face" style="left:301px;top:510.0px">Face_33</div>
<svg style="left:284px;top:528px" width="15" height="16" viewBox="0 0 15 16"><path d="M7.400 0.600Q10.800 3 14.400 4.600L9.400 15.400Q5.600 11.600 0.600 8.800z" fill="#17675a" stroke="#1f7a6a" stroke-width="0.600"/></svg>
<div class="face" style="left:301px;top:527.0px">Face_34</div>
<svg style="left:284px;top:545px" width="15" height="16" viewBox="0 0 15 16"><path d="M7.400 0.600Q10.800 3 14.400 4.600L9.400 15.400Q5.600 11.600 0.600 8.800z" fill="#17675a" stroke="#1f7a6a" stroke-width="0.600"/></svg>
<div class="face" style="left:301px;top:544.0px">Face_35</div>
<svg style="left:284px;top:562px" width="15" height="16" viewBox="0 0 15 16"><path d="M7.400 0.600Q10.800 3 14.400 4.600L9.400 15.400Q5.600 11.600 0.600 8.800z" fill="#17675a" stroke="#1f7a6a" stroke-width="0.600"/></svg>
<div class="face" style="left:301px;top:561.0px">Face_36</div>
<svg style="left:284px;top:579px" width="15" height="16" viewBox="0 0 15 16"><path d="M7.400 0.600Q10.800 3 14.400 4.600L9.400 15.400Q5.600 11.600 0.600 8.800z" fill="#17675a" stroke="#1f7a6a" stroke-width="0.600"/></svg>
<div class="face" style="left:301px;top:578.0px">Face_37</div>
<svg style="left:284px;top:596px" width="15" height="16" viewBox="0 0 15 16"><path d="M7.400 0.600Q10.800 3 14.400 4.600L9.400 15.400Q5.600 11.600 0.600 8.800z" fill="#17675a" stroke="#1f7a6a" stroke-width="0.600"/></svg>
<div class="face" style="left:301px;top:595.0px">Face_38</div>
<svg style="left:284px;top:613px" width="15" height="16" viewBox="0 0 15 16"><path d="M7.400 0.600Q10.800 3 14.400 4.600L9.400 15.400Q5.600 11.600 0.600 8.800z" fill="#17675a" stroke="#1f7a6a" stroke-width="0.600"/></svg>
<div class="face" style="left:301px;top:612.0px">Face_39</div>
<svg style="left:284px;top:630px" width="15" height="16" viewBox="0 0 15 16"><path d="M7.400 0.600Q10.800 3 14.400 4.600L9.400 15.400Q5.600 11.600 0.600 8.800z" fill="#17675a" stroke="#1f7a6a" stroke-width="0.600"/></svg>
<div class="face" style="left:301px;top:629.0px">Face_40</div>
<svg style="left:284px;top:647px" width="15" height="16" viewBox="0 0 15 16"><path d="M7.400 0.600Q10.800 3 14.400 4.600L9.400 15.400Q5.600 11.600 0.600 8.800z" fill="#17675a" stroke="#1f7a6a" stroke-width="0.600"/></svg>
<div class="face" style="left:301px;top:646.0px">Face_41</div>
<svg style="left:284px;top:664px" width="15" height="16" viewBox="0 0 15 16"><path d="M7.400 0.600Q10.800 3 14.400 4.600L9.400 15.400Q5.600 11.600 0.600 8.800z" fill="#17675a" stroke="#1f7a6a" stroke-width="0.600"/></svg>
<div class="face" style="left:301px;top:663.0px">Face_42</div>
<svg style="left:284px;top:681px" width="15" height="16" viewBox="0 0 15 16"><path d="M7.400 0.600Q10.800 3 14.400 4.600L9.400 15.400Q5.600 11.600 0.600 8.800z" fill="#17675a" stroke="#1f7a6a" stroke-width="0.600"/></svg>
<div class="face" style="left:301px;top:680.0px">Face_43</div>
<svg style="left:284px;top:698px" width="15" height="16" viewBox="0 0 15 16"><path d="M7.400 0.600Q10.800 3 14.400 4.600L9.400 15.400Q5.600 11.600 0.600 8.800z" fill="#17675a" stroke="#1f7a6a" stroke-width="0.600"/></svg>
<div class="face" style="left:301px;top:697.0px">Face_44</div>
<svg style="left:284px;top:715px" width="15" height="16" viewBox="0 0 15 16"><path d="M7.400 0.600Q10.800 3 14.400 4.600L9.400 15.400Q5.600 11.600 0.600 8.800z" fill="#17675a" stroke="#1f7a6a" stroke-width="0.600"/></svg>
<div class="face" style="left:301px;top:714.0px">Face_45</div>
<div class="abs" style="left:27px;top:738px;width:357px;height:17px;background:#161616"></div>
<div class="abs" style="left:69px;top:738px;width:298px;height:1px;background:#000"></div>
<div class="abs" style="left:44px;top:746px;width:25px;height:2px;background:#a8a8a8"></div>
<div class="pill"></div>
<svg style="left:422px;top:65px" width="10" height="6" viewBox="0 0 10 6"><path d="M5 0.400L9.800 5.600H0.200z" fill="#e8e8e8"/></svg>
<div class="circ" style="top:88px"></div>
<div class="circ" style="top:122px"></div>
<div class="circ" style="top:439px"></div>
<div class="circ" style="top:473px"></div>
<div class="circ" style="top:507px"></div>
<div class="circ" style="top:575px"></div>
<svg style="left:417px;top:93px" width="20" height="20" viewBox="0 0 20 20"><g fill="none" stroke="#a8a8a8" stroke-width="1.100"><rect x="5.500" y="2.600" width="9" height="8.400"/><path d="M5.500 5h9"/><rect x="3.200" y="11" width="13.600" height="4.400"/><path d="M5.500 15.400v2.200h9v-2.200"/></g></svg>
<svg style="left:417px;top:127px" width="20" height="20" viewBox="0 0 20 20"><rect x="5.500" y="2.600" width="9" height="8.400" fill="#ececec"/><path d="M5.500 4.800h9" stroke="#2e2e31" stroke-width="0.900"/><rect x="3.200" y="11" width="13.600" height="4.600" fill="#ececec"/><rect x="5.500" y="16.400" width="9" height="1.600" fill="#ececec"/></svg>
<svg style="left:417px;top:161px" width="20" height="20" viewBox="0 0 20 20"><rect x="6" y="2.400" width="8" height="7.600" fill="#17c39a"/><path d="M6 4.400h8" stroke="#0b8a6c" stroke-width="0.800"/><rect x="3.600" y="10.400" width="12.800" height="4.800" fill="#ececec"/><rect x="5.600" y="16" width="8.800" height="1.600" fill="#ececec"/></svg>
<svg style="left:417px;top:195px" width="20" height="20" viewBox="0 0 20 20"><rect x="3.800" y="3" width="12.400" height="14.200" fill="#ececec"/></svg>
<svg style="left:417px;top:229px" width="20" height="20" viewBox="0 0 20 20"><rect x="6" y="2.600" width="8" height="7" fill="#17c39a"/><path d="M6 4.600h8" stroke="#0b8a6c" stroke-width="0.800"/><rect x="3.400" y="9.800" width="13.200" height="5" fill="#17c39a"/><rect x="5.600" y="15.400" width="8.800" height="2" fill="#0fa07e"/></svg>
<svg style="left:417px;top:263px" width="20" height="20" viewBox="0 0 20 20"><rect x="5" y="3" width="10" height="2.600" fill="#ececec"/><rect x="4" y="6.200" width="12" height="4.200" fill="#ececec"/><path d="M6.600 10.800h6.800L11 17.600H9z" fill="#f2c73c"/></svg>
<svg style="left:417px;top:297px" width="20" height="20" viewBox="0 0 20 20"><rect x="7.200" y="2" width="5.600" height="1.800" fill="#ececec"/><rect x="7.200" y="4.600" width="5.600" height="1.800" fill="#ececec"/><path d="M7.800 7.200h4.400v8.400L10 18.200L7.800 15.600z" fill="#f2c73c"/><path d="M7.800 11l4.400-2.600M7.800 14.600l4.400-2.600" stroke="#7a5a10" stroke-width="1.100"/></svg>
<svg style="left:417px;top:331px" width="20" height="20" viewBox="0 0 20 20"><path d="M2.400 17.400V9.600Q2.400 5.800 7.800 5.200V17.400z" fill="#f2c73c"/><path d="M11.800 5.200Q17.600 5.800 17.600 9.600V17.400H11.800z" fill="#ececec"/><rect x="7.800" y="8" width="4" height="3.800" fill="#ececec"/><rect x="8.200" y="8.200" width="3.300" height="3.400" fill="#2e2e31"/><rect x="8.200" y="11.900" width="3.300" height="2.900" fill="#ececec"/><circle cx="9.800" cy="6" r="2.300" fill="#dcdcdc" stroke="#2e2e31" stroke-width="0.700"/></svg>
<svg style="left:417px;top:365px" width="20" height="20" viewBox="0 0 20 20"><path d="M3.800 3.600h10.200Q16.800 3.600 16.800 6.400V14.200Q16.800 17 14 17H5.200L3.800 15.600v-2.800h8V7.200h-8z" fill="#ececec"/><rect x="6.400" y="7.600" width="1.100" height="3.200" fill="#ececec"/><rect x="4" y="11.400" width="5.400" height="1" fill="#ececec"/></svg>
<svg style="left:417px;top:399px" width="20" height="20" viewBox="0 0 20 20"><g stroke="#cfcfcf" stroke-width="1.900" stroke-linecap="round" fill="none"><path d="M3.600 8.200L8.200 3.600M3.600 12.600L12.600 3.600M4.200 16.400L16.400 4.200M8 16.800L16.800 8M12.400 16.800L16.800 12.400"/></g><g stroke="#cfcfcf" stroke-width="1.100" fill="none"><path d="M8.200 3.600Q10.400 2 12.600 3.600M3.600 12.600Q2.200 14.800 4.200 16.400M16.400 4.200Q18.200 6 16.800 8M8 16.800Q10.200 18.400 12.400 16.800"/></g></svg>
<div class="abs" style="left:410px;top:431px;width:34px;height:1px;background:#77777a"></div>
<svg style="left:417px;top:444px" width="20" height="20" viewBox="0 0 20 20"><circle cx="10" cy="10" r="3.600" fill="#1fe0b0"/></svg>
<svg style="left:417px;top:478px" width="20" height="20" viewBox="0 0 20 20"><path d="M3.400 10.400V8A3.300 3.300 0 0 1 10 8v4A3.300 3.300 0 0 0 16.600 12V9.600" fill="none" stroke="#ececec" stroke-width="1.400"/></svg>
<svg style="left:417px;top:512px" width="20" height="20" viewBox="0 0 20 20"><path d="M3 4.200Q10 1.600 17 4.200V15.800Q10 13 3 15.800z" fill="#1ed3a6"/></svg>
<svg style="left:417px;top:546px" width="20" height="20" viewBox="0 0 20 20"><defs><linearGradient id="sg1" x1="0" x2="1"><stop offset="0" stop-color="#8a8a8a"/><stop offset="0.500" stop-color="#d8d8d8"/><stop offset="1" stop-color="#8a8a8a"/></linearGradient></defs><path d="M3 4.200Q10 1.600 17 4.200V15.800Q10 13 3 15.800z" fill="url(#sg1)" stroke="#1ed3a6" stroke-width="1.300"/></svg>
<svg style="left:417px;top:580px" width="20" height="20" viewBox="0 0 20 20"><g fill="none" stroke="#1ed3a6" stroke-width="1.300"><path d="M3.400 4.600Q10 2.200 16.600 4.600V15.600Q10 13.200 3.400 15.600z"/><path d="M10 3v10.600M3.400 9.800Q10 7.600 16.600 9.800"/></g></svg>
<svg style="left:417px;top:614px" width="20" height="20" viewBox="0 0 20 20"><defs><linearGradient id="sg2" x1="0" x2="1"><stop offset="0" stop-color="#777"/><stop offset="0.500" stop-color="#d8d8d8"/><stop offset="1" stop-color="#777"/></linearGradient></defs><path d="M3 4.400Q9.500 2 16 4.400V15.400Q9.500 12.800 3 15.400z" fill="url(#sg2)"/><circle cx="16.400" cy="15.400" r="2" fill="#1fe0b0"/></svg>
<div id="topbar"></div>
<div class="abs" style="left:674px;top:61px;width:1px;height:26px;background:#56565a"></div>
<svg style="left:551px;top:60px" width="28" height="28" viewBox="0 0 28 28"><path d="M17.900 8.400H11.500A6 6 0 0 0 11.500 20.400H17.900" fill="none" stroke="#141414" stroke-width="5.800"/><path d="M17.200 8.400H11.500A6 6 0 0 0 11.500 20.400H17.200" fill="none" stroke="#ececec" stroke-width="4.100"/><path d="M14.700 5.800v5.200M14.700 17.800v5.200" stroke="#141414" stroke-width="0.900"/><path d="M21.300 5.600v17.500" stroke="#ececec" stroke-width="1.300"/><circle cx="21.300" cy="14.400" r="3" fill="#17c39a"/></svg>
<svg style="left:595px;top:60px" width="28" height="28" viewBox="0 0 28 28"><path d="M1.800 22.600V13.400A8.400 8.400 0 0 1 10.200 5h3.600l2.600 1.200 1.800 2.200Q20.200 10.600 20.200 14v4.400h4.600v4.200z" fill="#ececec"/><path d="M1.800 22.600v-5.200l5.400 5.200z" fill="#bdbdbd"/><path d="M15.400 5.200l2.600 2.800" stroke="#8a8a8a" stroke-width="1.100"/><circle cx="10.600" cy="14.100" r="5.300" fill="#ececec" stroke="#2e2e31" stroke-width="1"/><circle cx="10.600" cy="14.100" r="3.900" fill="#2e2e31"/><circle cx="10.600" cy="14.100" r="2.700" fill="#17c39a"/><circle cx="16.300" cy="21" r="1.500" fill="#17c39a"/><rect x="20.200" y="18.600" width="4.600" height="4" fill="#bdbdbd"/><path d="M21.400 20.800h2.200" stroke="#2e2e31" stroke-width="1"/></svg>
<svg style="left:638px;top:60px" width="28" height="28" viewBox="0 0 28 28"><path d="M7.900 3.200h9.700v1.200H7.900z" fill="#cfcfcf"/><path d="M4.300 4.200h16.300v2.700H4.300z" fill="#ececec"/><path d="M7.300 6.900h2.400v7.400H7.300z" fill="#cfcfcf"/><path d="M9.700 6.900h4.900v15l-2.400 2.500h-2.500z" fill="#ececec"/><path d="M4.300 14.700h10.300l6.600 1.200v1.200H4.300z" fill="#e2e2e2"/><path d="M4.300 14.700h10.300" stroke="#2e2e31" stroke-width="0.700"/><path d="M7.300 17.100h2.400v5.400l-2.400-1.400z" fill="#cfcfcf"/><path d="M11.200 8.200h2.200M11.200 10h2.200M11.200 11.800h2.200" stroke="#2e2e31" stroke-width="0.800"/><path d="M9.700 17.100v6" stroke="#2e2e31" stroke-width="0.600"/><circle cx="20.600" cy="10.500" r="2.700" fill="#17c39a"/></svg>
<svg style="left:682px;top:60px" width="28" height="28" viewBox="0 0 28 28"><g fill="#17c39a"><path d="M14 2l3.600 4.400h-2.600v3.800h-2V6.400h-2.600z"/><path d="M14 26l3.600-4.400h-2.600v-3.800h-2v3.800h-2.600z"/><path d="M2 14l4.400-3.600v2.600h3.800v2H6.400v2.600z"/><path d="M26 14l-4.400-3.600v2.600h-3.800v2h3.800v2.600z"/></g><circle cx="14" cy="14" r="2.300" fill="#f4f4f4"/></svg>
<svg style="left:725px;top:60px" width="28" height="28" viewBox="0 0 28 28"><circle cx="14" cy="14" r="11.400" fill="#dcdcdc" stroke="#1a1a1a" stroke-width="0.800"/><g fill="none" stroke="#1a1a1a" stroke-width="0.700"><path d="M14 2.600L8 8.400L19.600 9.600zM8 8.400L3 16L9.400 19.800zM19.600 9.600L25 15L17.400 21.400zM9.400 19.800L17.400 21.400L13 25.400zM3 16L6 22.400L9.400 19.800M25 15L22 22L17.400 21.400M8 8.400L4.600 7.600M19.600 9.600L22.800 6.400"/></g><path d="M8 8.400L19.600 13.400L9.400 19.800z" fill="#17c39a" stroke="#1a1a1a" stroke-width="0.700"/></svg>
<svg style="left:768px;top:60px" width="28" height="28" viewBox="0 0 28 28"><path d="M12 2.600h4L25 19.600Q25 24.600 14 24.600T3 19.600z" fill="#e0e0e0"/><path d="M3 19.400Q3 23 14 23T25 19.400" fill="none" stroke="#2e2e31" stroke-width="1.100"/><path d="M1.600 18.600h24.800" stroke="#bdbdbd" stroke-width="0.800"/><ellipse cx="14" cy="15.400" rx="7.200" ry="3.300" fill="#17c39a" stroke="#2e2e31" stroke-width="0.800"/></svg>
<svg style="left:811px;top:60px" width="28" height="28" viewBox="0 0 28 28"><path d="M6.600 14.600h14.800L26.600 25.600H1.400z" fill="#d6d6d6"/><ellipse cx="14" cy="20.400" rx="6.400" ry="2.800" fill="#17c39a"/><path d="M7 7v5.400Q7 15 14 15T21 12.400V7z" fill="#d8d8d8"/><ellipse cx="14" cy="7" rx="7" ry="2.700" fill="#f6f6f6"/></svg>
<svg style="left:854px;top:60px" width="28" height="28" viewBox="0 0 28 28"><path d="M2.600 5.600L9.600 3l5 2.400L21 3l4.400 2.400v18.400L21 22l-6.400 3.200-5-2.400L2.600 25z" fill="#d8d8d8"/><path d="M9.600 3v19.800M14.600 5.400v19.800M21 3v19M2.600 14.600l7-1.600 5 1.400 6.400-1.600 4.400 1" fill="none" stroke="#2e2e31" stroke-width="1"/><circle cx="14.600" cy="12.600" r="3" fill="#17c39a" stroke="#2e2e31" stroke-width="0.900"/></svg>
<svg style="left:897px;top:60px" width="28" height="28" viewBox="0 0 28 28"><path d="M14 3.200L25.400 8.800L14 14.600L2.600 8.800z" fill="#f6f6f6"/><path d="M2.600 8.800L14 14.600V25L2.600 19z" fill="#e2e2e2"/><path d="M14 14.600L25.400 8.800V19L14 25z" fill="#bcbcbc"/><g stroke="#17c39a" stroke-width="1.300" fill="none"><path d="M5 11.400v4.800M7.800 12.800v4.800M10.600 14.200v4.800"/><path d="M5 11.400l1.400-0.600M7.800 12.800l1.400-0.600M10.600 14.200l1.400-0.600"/></g></svg>
<svg style="left:940px;top:60px" width="28" height="28" viewBox="0 0 28 28"><ellipse cx="14" cy="5.400" rx="7" ry="3" fill="#17c39a"/><path d="M6.600 15.600h14.800L26.600 26H1.400z" fill="#d6d6d6"/><ellipse cx="14" cy="21" rx="6.400" ry="2.800" fill="#242426"/></svg>
<svg style="left:983px;top:60px" width="28" height="28" viewBox="0 0 28 28"><g fill="none" stroke-width="1.300"><path d="M5.400 3.400h14.600a5 5 0 0 1 0 10H18" stroke="#ececec"/><path d="M10 13.400H7.600a5 5 0 0 0 0 10H14" stroke="#17c39a"/><path d="M20.600 18.400v7M17.100 21.900h7" stroke="#ececec" stroke-width="1.400"/></g><path d="M14 8.600l1.300 2.700 2.900-0.700-1.300 2.700 2.300 1.900-2.900 0.600v3l-2.300-1.900-2.300 1.900v-3l-2.900-0.600 2.300-1.900-1.300-2.700 2.900 0.700z" fill="#17c39a"/></svg>
<div class="abs" style="left:528px;top:730px;width:86px;height:30px;border-radius:5px;background:#2b2b2d"></div>
<svg style="left:534px;top:736px" width="18" height="18" viewBox="0 0 18 18"><rect x="5" y="5" width="8" height="8" fill="#f6f6f6"/><g fill="none" stroke="#1fe0b0" stroke-width="1.700"><path d="M1.400 5.400V1.400h4M12.600 1.400h4v4M16.600 12.600v4h-4M5.400 16.600h-4v-4"/></g></svg>
<svg style="left:562px;top:736px" width="18" height="18" viewBox="0 0 18 18"><defs><radialGradient id="rg1" cx="0.350" cy="0.300" r="0.800"><stop offset="0" stop-color="#fff"/><stop offset="0.600" stop-color="#c8c8c8"/><stop offset="1" stop-color="#777"/></radialGradient></defs><circle cx="9" cy="9" r="8.400" fill="url(#rg1)"/><path d="M0.800 9.600Q9 11.600 17.200 9.600M8.400 0.800Q10.600 9 8.400 17.200" fill="none" stroke="#444" stroke-width="1.100"/></svg>
<svg style="left:589px;top:735px" width="20" height="20" viewBox="0 0 20 20"><defs><linearGradient id="lg3" x1="0" x2="1"><stop offset="0" stop-color="#999"/><stop offset="0.400" stop-color="#f4f4f4"/><stop offset="1" stop-color="#8a8a8a"/></linearGradient></defs><path d="M6 1.400Q1 1.400 1 10T6 18.600Q11 18.600 11 10T6 1.400z" fill="url(#lg3)"/><path d="M6.400 1.400h3Q14 1.400 14 10T9.400 18.600h-3Q11 18.600 11 10T6.400 1.400z" fill="#dadada"/><ellipse cx="12" cy="10" rx="2.600" ry="5.400" fill="#8a8a8a"/><path d="M12 6.200h4.400v7.600H12z" fill="#e4e4e4"/><ellipse cx="16.400" cy="10" rx="1.800" ry="3.800" fill="#fafafa"/></svg>
<div class="bbtn" style="left:869px;width:30px"></div><div class="bbtn" style="left:900px;width:30px"></div><div class="bbtn" style="left:936px;width:120px"></div><div class="bbtn" style="left:1062px;width:30px"></div>
<svg style="left:876px;top:737px" width="16" height="16" viewBox="0 0 16 16"><path d="M8 1.600v12.800M1.600 8h12.800" stroke="#c4c4c4" stroke-width="1.400"/></svg>
<svg style="left:909px;top:741px" width="12" height="8" viewBox="0 0 12 8"><path d="M1.400 1.600L6 6l4.600-4.400" fill="none" stroke="#9a9a9a" stroke-width="1.300"/></svg>
<svg style="left:942px;top:736px" width="18" height="18" viewBox="0 0 18 18"><path d="M9 1.600V9M9 9L1.800 15.200M9 9l7.200 6.200" stroke="#d8d8d8" stroke-width="1" fill="none"/><path d="M9 0.800l1.200 2.400H7.800zM1 16l1-2.400 1.600 1.800zM17 16l-1-2.400-1.600 1.800z" fill="#d8d8d8"/><path d="M9 6.800l3.400 1.800v3.800L9 14.400 5.600 12.400V8.600z" fill="#17a582"/><path d="M9 6.800l3.400 1.800L9 10.600 5.600 8.600z" fill="#22d0a6"/></svg>
<div class="abs" style="left:965px;top:737px;font-size:13px;letter-spacing:-0.45px;line-height:16px;color:#f4f4f4">Local CS3</div>
<svg style="left:1067px;top:733px" width="22" height="24" viewBox="0 0 22 24"><path d="M11.400 3.600a5.400 5.400 0 0 0-6.800 5.200v5L2.800 17.600h14.400L15.400 13.800V12.600" fill="none" stroke="#c8c8c8" stroke-width="1.200"/><path d="M7.600 20.200h4.800" stroke="#c8c8c8" stroke-width="1.200"/><text x="12.800" y="10.800" font-family="Liberation Sans, sans-serif" font-size="11.500" fill="#f4f4f4">1</text></svg>
<div class="abs" style="left:1111px;top:742.4px;font-size:14px;letter-spacing:-0.3px;line-height:16px;color:#f4f4f4">0%</div>
<div class="abs" style="left:1142px;top:731px;width:10px;height:29px;border:2px solid #1e7f7b;background:#141c1c"></div>
<div id="frame"></div></div></body></html>
